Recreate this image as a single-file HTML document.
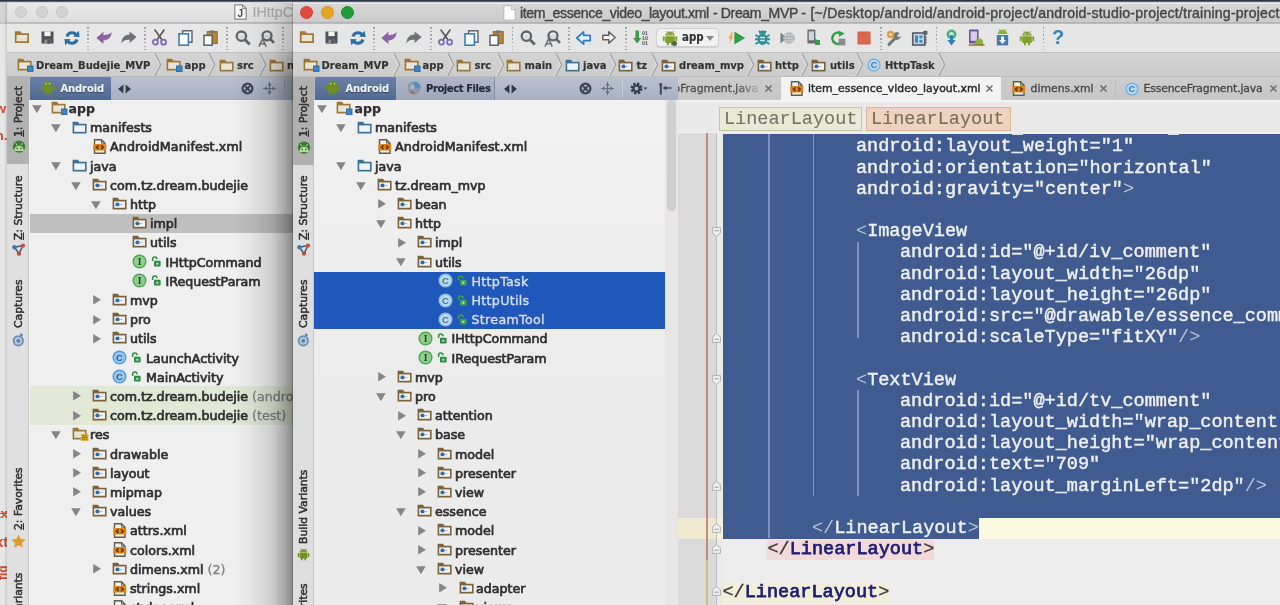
<!DOCTYPE html><html><head><meta charset="utf-8"><title>item_essence_video_layout.xml - Dream_MVP</title><style>
*{box-sizing:border-box;margin:0;padding:0}
html,body{width:1280px;height:605px;overflow:hidden;background:#e9e9e9}
#root{position:absolute;left:0;top:0;width:1280px;height:605px;overflow:hidden;font-family:"DejaVu Sans","Liberation Sans",sans-serif;color:#2b2b2b;filter:blur(0.6px)}
#root div,#root span,#root svg{position:absolute}
.ic{overflow:visible}
.topbar{left:0;top:0;width:1280px;height:3px;background:linear-gradient(#2a3346 0,#2c3549 40%,rgba(120,126,138,0.55) 68%,rgba(200,200,200,0) 90%)}
.behind{left:0;top:0;width:8px;height:605px;background:linear-gradient(#d6d6d6 0,#d2d2d2 22px,#b4b4b4 23px,#e7e7e7 24.5px,#e7e7e7 100%)}
.behindtxt{color:#cf4a34;font-size:13.5px;font-weight:bold;white-space:pre;font-family:"Liberation Sans",sans-serif}
.win{top:0;height:605px;overflow:hidden}
.titlebar{left:0;top:0;right:0;height:23px;background:linear-gradient(#ebebeb,#d9d9d9)}
.toolbar{left:0;top:23px;right:0;height:29px;background:#ececec;border-top:1px solid #c9c9c9}
.crumbs{left:0;top:52px;right:0;height:25px;background:linear-gradient(#d9d9d9,#d2d2d2);border-top:1px solid #bdbdbd;border-bottom:1px solid #b4b4b4}
.t{white-space:pre;line-height:1;transform:translateY(-50%)}
.tree{font-size:12.65px;-webkit-text-stroke:0.7px #303030;color:#303030}
.treeb{font-size:12.5px;font-weight:bold;-webkit-text-stroke:0.25px #2b2b2b;margin-left:-0.5px}
.gray{color:#808080;-webkit-text-stroke:0.3px #808080}
.crumb{font-family:"DejaVu Sans Condensed","DejaVu Sans",sans-serif;font-weight:bold;font-size:11.1px;-webkit-text-stroke:0.15px #333;color:#333}
.tab{font-size:10.85px;color:#444;-webkit-text-stroke:0.3px #444}
.title{font-family:"Liberation Sans",sans-serif;font-size:14.1px;color:#464646;-webkit-text-stroke:0.4px #464646}
.strip{top:77px;width:21px;bottom:0;background:#e3e3e3;border-right:1px solid #c4c4c4}
.stripsel{left:0;top:0;width:21px;height:88px;background:#b3b3b3}
.vt{white-space:pre;font-size:10.8px;line-height:1;transform-origin:0 0;transform:rotate(-90deg);-webkit-text-stroke:0.5px #303030;color:#303030}
.sep{width:1.6px;top:27px;height:23px;background:repeating-linear-gradient(180deg,#a4a4a4 0,#a4a4a4 1.5px,rgba(0,0,0,0) 1.5px,rgba(0,0,0,0) 3.7px)}
.code{font-family:"Liberation Mono",monospace;font-weight:normal;font-size:18.54px;white-space:pre;line-height:1;transform:translateY(-50%);color:#efefef;-webkit-text-stroke:0.45px #efefef}
.code i{font-style:normal;font-weight:normal;color:#b9c4d8;-webkit-text-stroke:0}
.code.ns i{color:#3a3a3a;-webkit-text-stroke:0.3px #3a3a3a}

</style></head><body><div id="root">
<div class="behind"></div>
<div class="behindtxt" style="top:101px;left:-4.5px">w</div>
<div class="behindtxt" style="top:127.5px;left:-4.5px">n.</div>
<div class="behindtxt" style="top:506px;left:-7px;text-decoration:line-through">ax</div>
<div class="behindtxt" style="top:533px;left:-5px;font-size:15px">xt</div>
<div class="behindtxt" style="top:580px;left:-4px;transform-origin:0 0;transform:rotate(-90deg);font-size:12px">fig</div>
<div style="left:4px;top:3px;width:3.5px;height:602px;background:linear-gradient(90deg,rgba(0,0,0,0),rgba(0,0,0,0.10) 60%,rgba(0,0,0,0.28) 100%)"></div>
<div style="left:7px;top:3px;width:300px;height:602px;background:#f6f6f6;"></div><div style="left:7px;top:3px;width:300px;height:20px;background:linear-gradient(#e9e9e9,#dedede);border-bottom:1px solid #b9b9b9"></div><div style="left:15px;top:6px;width:12px;height:12px;border-radius:6px;background:#d2d2d2;border:1px solid #c6c6c6"></div><div style="left:35.5px;top:6px;width:12px;height:12px;border-radius:6px;background:#d2d2d2;border:1px solid #c6c6c6"></div><div style="left:56px;top:6px;width:12px;height:12px;border-radius:6px;background:#d2d2d2;border:1px solid #c6c6c6"></div><svg class="ic" style="left:233.5px;top:4px" width="13" height="16" viewBox="0 0 13 16" ><path d="M0.8 0.8 H8.4 L12.2 4.6 V15.2 H0.8 Z" fill="#fafafa" stroke="#8a8a8a" stroke-width="1.2"/><path d="M8.4 0.8 V4.6 H12.2" fill="none" stroke="#8a8a8a" stroke-width="1"/><text x="6.4" y="13" text-anchor="middle" font-family="Liberation Sans,sans-serif" font-weight="bold" font-size="10" fill="#4a4a4a">J</text></svg><div class="t title" style="left:252.5px;top:12.3px;color:#adadad;-webkit-text-stroke:0.2px #adadad;font-size:14.3px">IHttpC</div><div style="left:7px;top:23px;width:300px;height:29px;background:#e7e7e7;border-top:1px solid #c0c0c0"></div><svg class="ic" style="left:13.5px;top:30px" width="16" height="14" viewBox="0 0 16 14" ><path d="M0.8 1.2 H6.4 L7.8 3.2 H15 V13 H0.8 Z" fill="#a07a38"/><rect x="2.6" y="5" width="10.6" height="6.2" fill="#e9e3d3"/></svg><svg class="ic" style="left:40.5px;top:30.5px" width="13" height="13" viewBox="0 0 13 13" ><path d="M0.5 0.5 H12.5 V12.5 H0.5 Z" fill="#4f5358"/><rect x="3.4" y="0.5" width="6.2" height="4.6" fill="#f2f2f2"/><rect x="3.4" y="8.6" width="6.2" height="3.9" fill="#8a8d92"/><rect x="6.4" y="9" width="2.6" height="3.5" fill="#4f5358"/></svg><svg class="ic" style="left:64px;top:29.5px" width="16" height="16" viewBox="0 0 16 16" ><path d="M12.6 5.2 A5.3 5.3 0 0 0 3 6.5 M3.4 10.8 A5.3 5.3 0 0 0 13 9.5" fill="none" stroke="#2a70a4" stroke-width="3"/><path d="M9.2 6.8 L15.6 7 L14.8 0.8 Z M6.8 9.2 L0.4 9 L1.2 15.2 Z" fill="#2a70a4"/></svg><div class="sep" style="left:87px"></div><svg class="ic" style="left:96px;top:31px" width="16" height="13" viewBox="0 0 16 13" ><path d="M0.4 7 L7.4 0.8 V4.2 C11.5 4.2 15 2.8 15.6 0.6 C15.6 6 12.5 9.6 7.4 9.6 V13 Z" fill="#8a64a4"/></svg><svg class="ic" style="left:121px;top:31px" width="16" height="13" viewBox="0 0 16 13" ><path d="M15.6 6 L8.6 0.4 V3.6 C4 3.6 0.6 6.6 0.4 12.4 C2 9.6 4.8 8.6 8.6 8.8 V12 Z" fill="#6f7378"/></svg><div class="sep" style="left:144px"></div><svg class="ic" style="left:152px;top:29px" width="15" height="17" viewBox="0 0 15 17" ><path d="M2.6 0.6 L10.4 11.4 M12.4 0.6 L4.6 11.4" stroke="#55595e" stroke-width="1.7" fill="none"/><circle cx="3.4" cy="13.2" r="2.5" fill="none" stroke="#7d68b4" stroke-width="1.7"/><circle cx="11.6" cy="13.2" r="2.5" fill="none" stroke="#7d68b4" stroke-width="1.7"/></svg><svg class="ic" style="left:178px;top:29.5px" width="15" height="16" viewBox="0 0 15 16" ><rect x="4.6" y="0.8" width="9.4" height="11.4" fill="#f4f6f8" stroke="#5a6068" stroke-width="1.4"/><rect x="1" y="3.8" width="9.4" height="11.4" fill="#fafcfe" stroke="#3f7fb0" stroke-width="1.6"/></svg><svg class="ic" style="left:203px;top:29.5px" width="15" height="16" viewBox="0 0 15 16" ><rect x="4.2" y="1.6" width="10" height="12" fill="#b8862e" stroke="#8c6420" stroke-width="1"/><rect x="7" y="0.4" width="4.4" height="2.6" fill="#777"/><rect x="1" y="5.4" width="8.2" height="9.8" fill="#fafafa" stroke="#5a6068" stroke-width="1.5"/></svg><div class="sep" style="left:226px"></div><svg class="ic" style="left:235px;top:29.5px" width="16" height="16" viewBox="0 0 16 16" ><circle cx="6.4" cy="6.2" r="4.7" fill="#d9dde0" stroke="#62666c" stroke-width="2.3"/><path d="M10 9.8 L14.8 14.6" stroke="#62666c" stroke-width="2.8"/><path d="M4 5.2 A2.6 2.6 0 0 1 8.8 5.2" fill="none" stroke="#f4f4f4" stroke-width="1.2"/></svg><svg class="ic" style="left:258px;top:29.5px" width="17" height="17" viewBox="0 0 17 17" ><circle cx="9" cy="5.8" r="4.5" fill="#d9dde0" stroke="#62666c" stroke-width="2.3"/><path d="M12.2 9 L16 12.8" stroke="#62666c" stroke-width="2.6"/><path d="M6.6 4.8 A2.6 2.6 0 0 1 11.4 4.8" fill="none" stroke="#f4f4f4" stroke-width="1.2"/><path d="M1 16.6 L4.6 8.6 L8.2 16.6 M2.4 13.8 H6.8" fill="none" stroke="#6c7076" stroke-width="1.5"/></svg><div class="sep" style="left:282px"></div><div style="left:7px;top:52px;width:300px;height:25px;background:linear-gradient(#d4d4d4,#cdcdcd);border-top:1px solid #c4c4c4;border-bottom:1px solid #b8b8b8"></div><svg class="ic" style="left:17px;top:58px" width="17" height="14" viewBox="0 0 17 14" ><path d="M0.6 0.8 H6 L7.4 2.8 H14.6 V12.4 H0.6 Z" fill="#9c7636"/><rect x="2.2" y="4.4" width="10.8" height="6.4" fill="#e9e4d6"/><rect x="10" y="7.5" width="6.5" height="6.5" fill="#2d74b2"/><rect x="11.2" y="8.7" width="4" height="4" fill="#4189c6"/></svg><div class="t crumb" style="left:36px;top:65.6px;">Dream_Budejie_MVP</div><svg class="ic" style="left:153px;top:53px" width="8" height="23" viewBox="0 0 8 23" ><path d="M0.6 0 L6.6 11.5 L0.6 23" fill="none" stroke="#e0e0e0" stroke-width="1.3"/><path d="M1.7 0 L7.7 11.5 L1.7 23" fill="none" stroke="#9c9c9c" stroke-width="1.1"/></svg><svg class="ic" style="left:166px;top:58px" width="17" height="14" viewBox="0 0 17 14" ><path d="M0.6 0.8 H6 L7.4 2.8 H14.6 V12.4 H0.6 Z" fill="#9c7636"/><rect x="2.2" y="4.4" width="10.8" height="6.4" fill="#e9e4d6"/><rect x="10" y="7.5" width="6.5" height="6.5" fill="#2d74b2"/><rect x="11.2" y="8.7" width="4" height="4" fill="#4189c6"/></svg><div class="t crumb" style="left:184.5px;top:65.6px;">app</div><svg class="ic" style="left:207px;top:53px" width="8" height="23" viewBox="0 0 8 23" ><path d="M0.6 0 L6.6 11.5 L0.6 23" fill="none" stroke="#e0e0e0" stroke-width="1.3"/><path d="M1.7 0 L7.7 11.5 L1.7 23" fill="none" stroke="#9c9c9c" stroke-width="1.1"/></svg><svg class="ic" style="left:218.5px;top:58.5px" width="16" height="13" viewBox="0 0 16 13" ><path d="M0.6 0.8 H6 L7.4 2.8 H14.6 V12.4 H0.6 Z" fill="#9c7636"/><rect x="2.2" y="4.4" width="10.8" height="6.4" fill="#e9e4d6"/></svg><div class="t crumb" style="left:237px;top:65.6px;">src</div><svg class="ic" style="left:258px;top:53px" width="8" height="23" viewBox="0 0 8 23" ><path d="M0.6 0 L6.6 11.5 L0.6 23" fill="none" stroke="#e0e0e0" stroke-width="1.3"/><path d="M1.7 0 L7.7 11.5 L1.7 23" fill="none" stroke="#9c9c9c" stroke-width="1.1"/></svg><svg class="ic" style="left:268.5px;top:58.5px" width="16" height="13" viewBox="0 0 16 13" ><path d="M0.6 0.8 H6 L7.4 2.8 H14.6 V12.4 H0.6 Z" fill="#9c7636"/><rect x="2.2" y="4.4" width="10.8" height="6.4" fill="#e9e4d6"/></svg><div class="t crumb" style="left:287px;top:65.6px;">n</div><div style="left:7px;top:77px;width:22px;height:528px;background:#e0e0e0;border-right:1px solid #c8c8c8"></div><div style="left:7px;top:77px;width:21.5px;height:87px;background:#b2b2b2;"></div><div class="vt" style="left:13.5px;top:136.5px;"><u>1</u>: Project</div><svg class="ic" style="left:11.5px;top:140px" width="14" height="13" viewBox="0 0 14 13" ><circle cx="7" cy="6.6" r="6.2" fill="#3d7f30"/><path d="M2.2 11 A4.8 5.2 0 0 1 11.8 11 Z" fill="#b4dca0"/><path d="M3.6 3 L5.2 5.6 M10.4 3 L8.8 5.6" stroke="#b4dca0" stroke-width="1"/><circle cx="5.2" cy="8.6" r="0.8" fill="#2f6a26"/><circle cx="8.8" cy="8.6" r="0.8" fill="#2f6a26"/></svg><div class="vt" style="left:13.5px;top:239.5px;"><u>Z</u>: Structure</div><svg class="ic" style="left:11.5px;top:243px" width="14" height="13" viewBox="0 0 14 13" ><path d="M2.4 4.2 L11 2.6 L7 10.6 Z" fill="none" stroke="#3f5878" stroke-width="1.5"/><circle cx="2.4" cy="4.2" r="2.2" fill="#3a78ba"/><circle cx="11" cy="2.6" r="2.1" fill="#cc5238"/><circle cx="7" cy="10.6" r="2.2" fill="#b8523c"/></svg><div class="vt" style="left:13.5px;top:328px;">Captures</div><svg class="ic" style="left:11.5px;top:332.5px" width="13" height="14" viewBox="0 0 13 14" ><path d="M8.2 1.2 L10.4 2.6" stroke="#56789f" stroke-width="2"/><circle cx="6.3" cy="7.8" r="5.6" fill="#688cb3"/><circle cx="6.3" cy="7.8" r="3.9" fill="#b2c6dc"/><circle cx="6.3" cy="7.8" r="1.9" fill="#5d7ea6"/></svg><div class="vt" style="left:13.5px;top:530px;"><u>2</u>: Favorites</div><svg class="ic" style="left:11px;top:534px" width="15" height="14" viewBox="0 0 15 14" ><path d="M7.5 0.4 L9.6 5 L14.6 5.5 L10.9 8.9 L12 13.8 L7.5 11.3 L3 13.8 L4.1 8.9 L0.4 5.5 L5.4 5 Z" fill="#e39a2a"/></svg><div class="vt" style="left:13.5px;top:646.5px;">Build Variants</div><div style="left:29px;top:77px;width:280px;height:23px;background:linear-gradient(#bac2d1,#a8b1c3)"></div><div style="left:30px;top:77px;width:81px;height:23px;background:linear-gradient(#6a80a6,#52698f)"></div><svg class="ic" style="left:40.3px;top:80.3px" width="15.5" height="15.5" viewBox="0 0 16 16" ><path d="M3.2 6.2 H12.8 V12 A1 1 0 0 1 11.8 13 H4.2 A1 1 0 0 1 3.2 12 Z" fill="#6f8f22"/><path d="M3.3 5.6 A4.7 4.2 0 0 1 12.7 5.6 Z" fill="#6f8f22"/><rect x="0.8" y="6.2" width="1.9" height="5" rx="0.95" fill="#6f8f22"/><rect x="13.3" y="6.2" width="1.9" height="5" rx="0.95" fill="#6f8f22"/><rect x="5" y="12" width="2" height="3.4" rx="1" fill="#6f8f22"/><rect x="9" y="12" width="2" height="3.4" rx="1" fill="#6f8f22"/><path d="M4.6 0.8 L5.8 2.6 M11.4 0.8 L10.2 2.6" stroke="#6f8f22" stroke-width="0.8"/><circle cx="6" cy="3.8" r="0.6" fill="#fff"/><circle cx="10" cy="3.8" r="0.6" fill="#fff"/></svg><div class="t crumb" style="left:60.5px;top:88.5px;color:#f2f4f8;-webkit-text-stroke:0.1px #f2f4f8;text-shadow:0 1px 1px #33415c;letter-spacing:-0.118px;">Android</div><svg class="ic" style="left:118px;top:83.5px" width="13" height="10" viewBox="0 0 13 10" ><path d="M0 5 L5.4 0.4 V9.6 Z M13 5 L7.6 0.4 V9.6 Z" fill="#2f3a4a"/></svg><svg class="ic" style="left:241px;top:82px" width="13" height="13" viewBox="0 0 13 13" ><circle cx="6.5" cy="6.5" r="4.9" fill="none" stroke="#3d4758" stroke-width="2.3"/><path d="M3.4 3.4 L9.6 9.6 M9.6 3.4 L3.4 9.6" stroke="#3d4758" stroke-width="2"/><circle cx="6.5" cy="6.5" r="1.7" fill="#3d4758"/></svg><svg class="ic" style="left:263px;top:82px" width="13" height="13" viewBox="0 0 13 13" ><path d="M6.5 0 V13 M0 6.5 H13" stroke="#667087" stroke-width="1.2"/><path d="M6.5 5 L4.2 2.2 H8.8 Z M6.5 8 L4.2 10.8 H8.8 Z M5 6.5 L2.2 4.2 V8.8 Z M8 6.5 L10.8 4.2 V8.8 Z" fill="#667087"/></svg><div style="left:283.5px;top:80px;width:1px;height:17px;background:#98a5bb;"></div><div style="left:29.5px;top:100px;width:280px;height:505px;background:#efefef;"></div><div style="left:29.5px;top:214px;width:280px;height:19px;background:#bfbfbf;"></div><div style="left:29.5px;top:386px;width:280px;height:39px;background:#e1e8d6;"></div><svg class="ic" style="left:32.4px;top:104.7px" width="9.8" height="8.4" viewBox="0 0 9.8 8.4" ><path d="M0.1 0.2 H9.7 L4.9 8.2 Z" fill="#858585"/></svg><svg class="ic" style="left:51px;top:101.0px" width="17" height="14" viewBox="0 0 17 14" ><path d="M0.6 0.8 H6 L7.4 2.8 H14.6 V12.4 H0.6 Z" fill="#9c7636"/><rect x="2.2" y="4.4" width="10.8" height="6.4" fill="#e9e4d6"/><rect x="10" y="7.5" width="6.5" height="6.5" fill="#2d74b2"/><rect x="11.2" y="8.7" width="4" height="4" fill="#4189c6"/></svg><div class="t tree treeb" style="left:69px;top:108.9px;">app</div><svg class="ic" style="left:51.4px;top:123.9px" width="9.8" height="8.4" viewBox="0 0 9.8 8.4" ><path d="M0.1 0.2 H9.7 L4.9 8.2 Z" fill="#858585"/></svg><svg class="ic" style="left:72px;top:120.7px" width="16" height="13" viewBox="0 0 16 13" ><path d="M0.6 0.8 H6 L7.4 2.8 H14.6 V12.4 H0.6 Z" fill="#36729a"/><rect x="2.2" y="4.4" width="10.8" height="6.4" fill="#f1f4f6"/></svg><div class="t tree" style="left:90px;top:128.1px;">manifests</div><svg class="ic" style="left:93px;top:138.9px" width="14" height="15" viewBox="0 0 14 15" ><path d="M1.5 0.8 H8.5 L12 4.2 V14.2 H1.5 Z" fill="#f2f0ea" stroke="#625c50" stroke-width="1.4"/><path d="M8.5 0.8 V4.2 H12" fill="none" stroke="#625c50" stroke-width="1"/><rect x="0.3" y="5" width="13" height="6.6" rx="1.2" fill="#db851f"/><path d="M5.6 6.4 L3.3 8.3 L5.6 10.2 M8 6.4 L10.3 8.3 L8 10.2" fill="none" stroke="#6b3608" stroke-width="1.5"/></svg><div class="t tree" style="left:110px;top:147.3px;;letter-spacing:0.124px;">AndroidManifest.xml</div><svg class="ic" style="left:51.4px;top:162.3px" width="9.8" height="8.4" viewBox="0 0 9.8 8.4" ><path d="M0.1 0.2 H9.7 L4.9 8.2 Z" fill="#858585"/></svg><svg class="ic" style="left:72px;top:159.1px" width="16" height="13" viewBox="0 0 16 13" ><path d="M0.6 0.8 H6 L7.4 2.8 H14.6 V12.4 H0.6 Z" fill="#36729a"/><rect x="2.2" y="4.4" width="10.8" height="6.4" fill="#f1f4f6"/></svg><div class="t tree" style="left:90px;top:166.5px;">java</div><svg class="ic" style="left:71.4px;top:181.5px" width="9.8" height="8.4" viewBox="0 0 9.8 8.4" ><path d="M0.1 0.2 H9.7 L4.9 8.2 Z" fill="#858585"/></svg><svg class="ic" style="left:91.5px;top:177.7px" width="16" height="13" viewBox="0 0 16 13" ><path d="M0.6 0.8 H6 L7.4 2.8 H14.6 V12.4 H0.6 Z" fill="#7d6238"/><rect x="2.2" y="4.4" width="10.8" height="6.4" fill="#f1f1f4"/><ellipse cx="5.5" cy="7.4" rx="2.1" ry="1.9" fill="#2f6caa"/><rect x="7.6" y="7" width="2.8" height="0.9" fill="#a8b4c0"/></svg><div class="t tree" style="left:110px;top:185.7px;">com.tz.dream.budejie</div><svg class="ic" style="left:91.4px;top:200.7px" width="9.8" height="8.4" viewBox="0 0 9.8 8.4" ><path d="M0.1 0.2 H9.7 L4.9 8.2 Z" fill="#858585"/></svg><svg class="ic" style="left:111.5px;top:196.9px" width="16" height="13" viewBox="0 0 16 13" ><path d="M0.6 0.8 H6 L7.4 2.8 H14.6 V12.4 H0.6 Z" fill="#7d6238"/><rect x="2.2" y="4.4" width="10.8" height="6.4" fill="#f1f1f4"/><ellipse cx="5.5" cy="7.4" rx="2.1" ry="1.9" fill="#2f6caa"/><rect x="7.6" y="7" width="2.8" height="0.9" fill="#a8b4c0"/></svg><div class="t tree" style="left:130px;top:204.9px;">http</div><svg class="ic" style="left:131.5px;top:216.1px" width="16" height="13" viewBox="0 0 16 13" ><path d="M0.6 0.8 H6 L7.4 2.8 H14.6 V12.4 H0.6 Z" fill="#7d6238"/><rect x="2.2" y="4.4" width="10.8" height="6.4" fill="#f1f1f4"/><ellipse cx="5.5" cy="7.4" rx="2.1" ry="1.9" fill="#2f6caa"/><rect x="7.6" y="7" width="2.8" height="0.9" fill="#a8b4c0"/></svg><div class="t tree" style="left:150px;top:224.1px;">impl</div><svg class="ic" style="left:131.5px;top:235.3px" width="16" height="13" viewBox="0 0 16 13" ><path d="M0.6 0.8 H6 L7.4 2.8 H14.6 V12.4 H0.6 Z" fill="#7d6238"/><rect x="2.2" y="4.4" width="10.8" height="6.4" fill="#f1f1f4"/><ellipse cx="5.5" cy="7.4" rx="2.1" ry="1.9" fill="#2f6caa"/><rect x="7.6" y="7" width="2.8" height="0.9" fill="#a8b4c0"/></svg><div class="t tree" style="left:150px;top:243.3px;">utils</div><svg class="ic" style="left:132px;top:254.1px" width="15" height="15" viewBox="0 0 15 15" ><circle cx="7.5" cy="7.5" r="7" fill="#4fa653"/><circle cx="7.5" cy="7.5" r="5.6" fill="#90cf8d"/><text x="7.5" y="11" text-anchor="middle" font-family='"Liberation Serif",serif' font-weight="bold" font-size="9.5" fill="#1c4a24">I</text></svg><svg class="ic" style="left:150.5px;top:256.1px" width="10" height="11" viewBox="0 0 10 11" ><path d="M1.6 5 V3.2 A2.2 2.2 0 0 1 6 3.2" fill="none" stroke="#2f8c44" stroke-width="1.5"/><rect x="3" y="4.8" width="6.6" height="5.8" rx="0.8" fill="#2f8c44"/><rect x="5.3" y="6.8" width="2" height="1.9" fill="#cfe8d0"/></svg><div class="t tree" style="left:165.5px;top:262.5px;">IHttpCommand</div><svg class="ic" style="left:132px;top:273.3px" width="15" height="15" viewBox="0 0 15 15" ><circle cx="7.5" cy="7.5" r="7" fill="#4fa653"/><circle cx="7.5" cy="7.5" r="5.6" fill="#90cf8d"/><text x="7.5" y="11" text-anchor="middle" font-family='"Liberation Serif",serif' font-weight="bold" font-size="9.5" fill="#1c4a24">I</text></svg><svg class="ic" style="left:150.5px;top:275.3px" width="10" height="11" viewBox="0 0 10 11" ><path d="M1.6 5 V3.2 A2.2 2.2 0 0 1 6 3.2" fill="none" stroke="#2f8c44" stroke-width="1.5"/><rect x="3" y="4.8" width="6.6" height="5.8" rx="0.8" fill="#2f8c44"/><rect x="5.3" y="6.8" width="2" height="1.9" fill="#cfe8d0"/></svg><div class="t tree" style="left:165.5px;top:281.7px;">IRequestParam</div><svg class="ic" style="left:92.7px;top:295.4px" width="8.2" height="9.6" viewBox="0 0 8.2 9.6" ><path d="M0.2 0.1 V9.5 L8 4.8 Z" fill="#858585"/></svg><svg class="ic" style="left:111.5px;top:292.9px" width="16" height="13" viewBox="0 0 16 13" ><path d="M0.6 0.8 H6 L7.4 2.8 H14.6 V12.4 H0.6 Z" fill="#7d6238"/><rect x="2.2" y="4.4" width="10.8" height="6.4" fill="#f1f1f4"/><ellipse cx="5.5" cy="7.4" rx="2.1" ry="1.9" fill="#2f6caa"/><rect x="7.6" y="7" width="2.8" height="0.9" fill="#a8b4c0"/></svg><div class="t tree" style="left:130px;top:300.9px;">mvp</div><svg class="ic" style="left:92.7px;top:314.6px" width="8.2" height="9.6" viewBox="0 0 8.2 9.6" ><path d="M0.2 0.1 V9.5 L8 4.8 Z" fill="#858585"/></svg><svg class="ic" style="left:111.5px;top:312.1px" width="16" height="13" viewBox="0 0 16 13" ><path d="M0.6 0.8 H6 L7.4 2.8 H14.6 V12.4 H0.6 Z" fill="#7d6238"/><rect x="2.2" y="4.4" width="10.8" height="6.4" fill="#f1f1f4"/><ellipse cx="5.5" cy="7.4" rx="2.1" ry="1.9" fill="#2f6caa"/><rect x="7.6" y="7" width="2.8" height="0.9" fill="#a8b4c0"/></svg><div class="t tree" style="left:130px;top:320.1px;">pro</div><svg class="ic" style="left:92.7px;top:333.8px" width="8.2" height="9.6" viewBox="0 0 8.2 9.6" ><path d="M0.2 0.1 V9.5 L8 4.8 Z" fill="#858585"/></svg><svg class="ic" style="left:111.5px;top:331.3px" width="16" height="13" viewBox="0 0 16 13" ><path d="M0.6 0.8 H6 L7.4 2.8 H14.6 V12.4 H0.6 Z" fill="#7d6238"/><rect x="2.2" y="4.4" width="10.8" height="6.4" fill="#f1f1f4"/><ellipse cx="5.5" cy="7.4" rx="2.1" ry="1.9" fill="#2f6caa"/><rect x="7.6" y="7" width="2.8" height="0.9" fill="#a8b4c0"/></svg><div class="t tree" style="left:130px;top:339.3px;">utils</div><svg class="ic" style="left:112px;top:350.1px" width="15" height="15" viewBox="0 0 15 15" ><circle cx="7.5" cy="7.5" r="7" fill="#4f9bdc"/><circle cx="7.5" cy="7.5" r="5.6" fill="#98c9f0"/><text x="7.5" y="11" text-anchor="middle" font-family='"Liberation Sans",sans-serif' font-weight="bold" font-size="9.5" fill="#2c5c8c">C</text></svg><svg class="ic" style="left:130.5px;top:352.1px" width="10" height="11" viewBox="0 0 10 11" ><path d="M1.6 5 V3.2 A2.2 2.2 0 0 1 6 3.2" fill="none" stroke="#2f8c44" stroke-width="1.5"/><rect x="3" y="4.8" width="6.6" height="5.8" rx="0.8" fill="#2f8c44"/><rect x="5.3" y="6.8" width="2" height="1.9" fill="#cfe8d0"/></svg><div class="t tree" style="left:146px;top:358.5px;">LaunchActivity</div><svg class="ic" style="left:112px;top:369.3px" width="15" height="15" viewBox="0 0 15 15" ><circle cx="7.5" cy="7.5" r="7" fill="#4f9bdc"/><circle cx="7.5" cy="7.5" r="5.6" fill="#98c9f0"/><text x="7.5" y="11" text-anchor="middle" font-family='"Liberation Sans",sans-serif' font-weight="bold" font-size="9.5" fill="#2c5c8c">C</text></svg><svg class="ic" style="left:130.5px;top:371.3px" width="10" height="11" viewBox="0 0 10 11" ><path d="M1.6 5 V3.2 A2.2 2.2 0 0 1 6 3.2" fill="none" stroke="#2f8c44" stroke-width="1.5"/><rect x="3" y="4.8" width="6.6" height="5.8" rx="0.8" fill="#2f8c44"/><rect x="5.3" y="6.8" width="2" height="1.9" fill="#cfe8d0"/></svg><div class="t tree" style="left:146px;top:377.7px;">MainActivity</div><svg class="ic" style="left:72.7px;top:391.4px" width="8.2" height="9.6" viewBox="0 0 8.2 9.6" ><path d="M0.2 0.1 V9.5 L8 4.8 Z" fill="#858585"/></svg><svg class="ic" style="left:91.5px;top:388.9px" width="16" height="13" viewBox="0 0 16 13" ><path d="M0.6 0.8 H6 L7.4 2.8 H14.6 V12.4 H0.6 Z" fill="#7d6238"/><rect x="2.2" y="4.4" width="10.8" height="6.4" fill="#f1f1f4"/><ellipse cx="5.5" cy="7.4" rx="2.1" ry="1.9" fill="#2f6caa"/><rect x="7.6" y="7" width="2.8" height="0.9" fill="#a8b4c0"/></svg><div class="t tree" style="left:110px;top:396.9px;">com.tz.dream.budejie<span class="gray" style="position:static"> (andro</span></div><svg class="ic" style="left:72.7px;top:410.6px" width="8.2" height="9.6" viewBox="0 0 8.2 9.6" ><path d="M0.2 0.1 V9.5 L8 4.8 Z" fill="#858585"/></svg><svg class="ic" style="left:91.5px;top:408.1px" width="16" height="13" viewBox="0 0 16 13" ><path d="M0.6 0.8 H6 L7.4 2.8 H14.6 V12.4 H0.6 Z" fill="#7d6238"/><rect x="2.2" y="4.4" width="10.8" height="6.4" fill="#f1f1f4"/><ellipse cx="5.5" cy="7.4" rx="2.1" ry="1.9" fill="#2f6caa"/><rect x="7.6" y="7" width="2.8" height="0.9" fill="#a8b4c0"/></svg><div class="t tree" style="left:110px;top:416.1px;">com.tz.dream.budejie<span class="gray" style="position:static"> (test)</span></div><svg class="ic" style="left:51.4px;top:431.1px" width="9.8" height="8.4" viewBox="0 0 9.8 8.4" ><path d="M0.1 0.2 H9.7 L4.9 8.2 Z" fill="#858585"/></svg><svg class="ic" style="left:72px;top:427.4px" width="17" height="14" viewBox="0 0 17 14" ><path d="M0.6 0.8 H6 L7.4 2.8 H14.6 V12.4 H0.6 Z" fill="#9c7636"/><rect x="2.2" y="4.4" width="10.8" height="6.4" fill="#e9e4d6"/><rect x="9" y="7" width="7.5" height="7" fill="#e8b23a"/><path d="M10 8.8h5.5M10 10.5h5.5M10 12.2h5.5" stroke="#8a6414" stroke-width="0.9"/></svg><div class="t tree" style="left:90px;top:435.3px;">res</div><svg class="ic" style="left:72.7px;top:449.0px" width="8.2" height="9.6" viewBox="0 0 8.2 9.6" ><path d="M0.2 0.1 V9.5 L8 4.8 Z" fill="#858585"/></svg><svg class="ic" style="left:91.5px;top:446.5px" width="16" height="13" viewBox="0 0 16 13" ><path d="M0.6 0.8 H6 L7.4 2.8 H14.6 V12.4 H0.6 Z" fill="#7d6238"/><rect x="2.2" y="4.4" width="10.8" height="6.4" fill="#f1f1f4"/><ellipse cx="5.5" cy="7.4" rx="2.1" ry="1.9" fill="#2f6caa"/><rect x="7.6" y="7" width="2.8" height="0.9" fill="#a8b4c0"/></svg><div class="t tree" style="left:110px;top:454.5px;">drawable</div><svg class="ic" style="left:72.7px;top:468.2px" width="8.2" height="9.6" viewBox="0 0 8.2 9.6" ><path d="M0.2 0.1 V9.5 L8 4.8 Z" fill="#858585"/></svg><svg class="ic" style="left:91.5px;top:465.7px" width="16" height="13" viewBox="0 0 16 13" ><path d="M0.6 0.8 H6 L7.4 2.8 H14.6 V12.4 H0.6 Z" fill="#7d6238"/><rect x="2.2" y="4.4" width="10.8" height="6.4" fill="#f1f1f4"/><ellipse cx="5.5" cy="7.4" rx="2.1" ry="1.9" fill="#2f6caa"/><rect x="7.6" y="7" width="2.8" height="0.9" fill="#a8b4c0"/></svg><div class="t tree" style="left:110px;top:473.7px;">layout</div><svg class="ic" style="left:72.7px;top:487.4px" width="8.2" height="9.6" viewBox="0 0 8.2 9.6" ><path d="M0.2 0.1 V9.5 L8 4.8 Z" fill="#858585"/></svg><svg class="ic" style="left:91.5px;top:484.9px" width="16" height="13" viewBox="0 0 16 13" ><path d="M0.6 0.8 H6 L7.4 2.8 H14.6 V12.4 H0.6 Z" fill="#7d6238"/><rect x="2.2" y="4.4" width="10.8" height="6.4" fill="#f1f1f4"/><ellipse cx="5.5" cy="7.4" rx="2.1" ry="1.9" fill="#2f6caa"/><rect x="7.6" y="7" width="2.8" height="0.9" fill="#a8b4c0"/></svg><div class="t tree" style="left:110px;top:492.9px;">mipmap</div><svg class="ic" style="left:71.4px;top:507.9px" width="9.8" height="8.4" viewBox="0 0 9.8 8.4" ><path d="M0.1 0.2 H9.7 L4.9 8.2 Z" fill="#858585"/></svg><svg class="ic" style="left:91.5px;top:504.1px" width="16" height="13" viewBox="0 0 16 13" ><path d="M0.6 0.8 H6 L7.4 2.8 H14.6 V12.4 H0.6 Z" fill="#7d6238"/><rect x="2.2" y="4.4" width="10.8" height="6.4" fill="#f1f1f4"/><ellipse cx="5.5" cy="7.4" rx="2.1" ry="1.9" fill="#2f6caa"/><rect x="7.6" y="7" width="2.8" height="0.9" fill="#a8b4c0"/></svg><div class="t tree" style="left:110px;top:512.1px;">values</div><svg class="ic" style="left:113px;top:522.9px" width="14" height="15" viewBox="0 0 14 15" ><path d="M1.5 0.8 H8.5 L12 4.2 V14.2 H1.5 Z" fill="#f2f0ea" stroke="#625c50" stroke-width="1.4"/><path d="M8.5 0.8 V4.2 H12" fill="none" stroke="#625c50" stroke-width="1"/><rect x="0.3" y="5" width="13" height="6.6" rx="1.2" fill="#db851f"/><path d="M5.6 6.4 L3.3 8.3 L5.6 10.2 M8 6.4 L10.3 8.3 L8 10.2" fill="none" stroke="#6b3608" stroke-width="1.5"/></svg><div class="t tree" style="left:130px;top:531.3px;">attrs.xml</div><svg class="ic" style="left:113px;top:542.1px" width="14" height="15" viewBox="0 0 14 15" ><path d="M1.5 0.8 H8.5 L12 4.2 V14.2 H1.5 Z" fill="#f2f0ea" stroke="#625c50" stroke-width="1.4"/><path d="M8.5 0.8 V4.2 H12" fill="none" stroke="#625c50" stroke-width="1"/><rect x="0.3" y="5" width="13" height="6.6" rx="1.2" fill="#db851f"/><path d="M5.6 6.4 L3.3 8.3 L5.6 10.2 M8 6.4 L10.3 8.3 L8 10.2" fill="none" stroke="#6b3608" stroke-width="1.5"/></svg><div class="t tree" style="left:130px;top:550.5px;">colors.xml</div><svg class="ic" style="left:92.7px;top:564.2px" width="8.2" height="9.6" viewBox="0 0 8.2 9.6" ><path d="M0.2 0.1 V9.5 L8 4.8 Z" fill="#858585"/></svg><svg class="ic" style="left:111.5px;top:561.7px" width="16" height="13" viewBox="0 0 16 13" ><path d="M0.6 0.8 H6 L7.4 2.8 H14.6 V12.4 H0.6 Z" fill="#7d6238"/><rect x="2.2" y="4.4" width="10.8" height="6.4" fill="#f1f1f4"/><ellipse cx="5.5" cy="7.4" rx="2.1" ry="1.9" fill="#2f6caa"/><rect x="7.6" y="7" width="2.8" height="0.9" fill="#a8b4c0"/></svg><div class="t tree" style="left:130px;top:569.7px;">dimens.xml<span class="gray" style="position:static"> (2)</span></div><svg class="ic" style="left:113px;top:580.5px" width="14" height="15" viewBox="0 0 14 15" ><path d="M1.5 0.8 H8.5 L12 4.2 V14.2 H1.5 Z" fill="#f2f0ea" stroke="#625c50" stroke-width="1.4"/><path d="M8.5 0.8 V4.2 H12" fill="none" stroke="#625c50" stroke-width="1"/><rect x="0.3" y="5" width="13" height="6.6" rx="1.2" fill="#db851f"/><path d="M5.6 6.4 L3.3 8.3 L5.6 10.2 M8 6.4 L10.3 8.3 L8 10.2" fill="none" stroke="#6b3608" stroke-width="1.5"/></svg><div class="t tree" style="left:130px;top:588.9px;">strings.xml</div><svg class="ic" style="left:113px;top:599.7px" width="14" height="15" viewBox="0 0 14 15" ><path d="M1.5 0.8 H8.5 L12 4.2 V14.2 H1.5 Z" fill="#f2f0ea" stroke="#625c50" stroke-width="1.4"/><path d="M8.5 0.8 V4.2 H12" fill="none" stroke="#625c50" stroke-width="1"/><rect x="0.3" y="5" width="13" height="6.6" rx="1.2" fill="#db851f"/><path d="M5.6 6.4 L3.3 8.3 L5.6 10.2 M8 6.4 L10.3 8.3 L8 10.2" fill="none" stroke="#6b3608" stroke-width="1.5"/></svg><div class="t tree" style="left:130px;top:608.1px;">styles.xml</div><div style="left:233px;top:3px;width:60px;height:602px;-webkit-mask-image:linear-gradient(180deg,rgba(0,0,0,0.38) 0,rgba(0,0,0,0.5) 45px,#000 76px);mask-image:linear-gradient(180deg,rgba(0,0,0,0.38) 0,rgba(0,0,0,0.5) 45px,#000 76px);background:linear-gradient(90deg,rgba(0,0,0,0) 0,rgba(0,0,0,0.04) 30%,rgba(0,0,0,0.14) 65%,rgba(0,0,0,0.29) 85%,rgba(0,0,0,0.43) 100%)"></div>
<div style="left:293px;top:3px;width:987px;height:602px;background:#ececec;"></div><div style="left:293px;top:3px;width:987px;height:20px;background:linear-gradient(#f0f0f0 0,#d6d6d6 1.6px,#cbcbcb 100%);border-bottom:1px solid #b2b2b2"></div><div style="left:300.3px;top:5.5px;width:13px;height:13px;border-radius:6.5px;background:#e2493b;border:1px solid #cf3d31"></div><div style="left:320.5px;top:5.5px;width:13px;height:13px;border-radius:6.5px;background:#e6a624;border:1px solid #d4961c"></div><div style="left:340.8px;top:5.5px;width:13px;height:13px;border-radius:6.5px;background:#1f9c3a;border:1px solid #198a32"></div><svg class="ic" style="left:503px;top:4.5px" width="13" height="16" viewBox="0 0 13 16" ><path d="M0.8 0.8 H8.4 L12.2 4.6 V15.2 H0.8 Z" fill="#fdfdfd" stroke="#b5b5b5" stroke-width="1"/><path d="M8.4 0.8 V4.6 H12.2" fill="#e4e4e4" stroke="#b5b5b5" stroke-width="0.8"/></svg><div class="t title" style="left:520px;top:12.6px;;letter-spacing:-0.38px;">item_essence_video_layout.xml</div><div class="t title" style="left:713px;top:12.6px;;letter-spacing:-0.395px;">- Dream_MVP -</div><div class="t title" style="left:810.5px;top:12.6px;;letter-spacing:0.203px;">[~/Desktop/android/android-project/android-studio-project/training-project</div><div style="left:293px;top:23px;width:987px;height:29px;background:#e6e6e6;border-top:1px solid #bcbcbc"></div><svg class="ic" style="left:298.7px;top:30px" width="16" height="14" viewBox="0 0 16 14" ><path d="M0.8 1.2 H6.4 L7.8 3.2 H15 V13 H0.8 Z" fill="#a07a38"/><rect x="2.6" y="5" width="10.6" height="6.2" fill="#e9e3d3"/></svg><svg class="ic" style="left:325px;top:30.5px" width="13" height="13" viewBox="0 0 13 13" ><path d="M0.5 0.5 H12.5 V12.5 H0.5 Z" fill="#4f5358"/><rect x="3.4" y="0.5" width="6.2" height="4.6" fill="#f2f2f2"/><rect x="3.4" y="8.6" width="6.2" height="3.9" fill="#8a8d92"/><rect x="6.4" y="9" width="2.6" height="3.5" fill="#4f5358"/></svg><svg class="ic" style="left:350px;top:29.5px" width="16" height="16" viewBox="0 0 16 16" ><path d="M12.6 5.2 A5.3 5.3 0 0 0 3 6.5 M3.4 10.8 A5.3 5.3 0 0 0 13 9.5" fill="none" stroke="#2a70a4" stroke-width="3"/><path d="M9.2 6.8 L15.6 7 L14.8 0.8 Z M6.8 9.2 L0.4 9 L1.2 15.2 Z" fill="#2a70a4"/></svg><div class="sep" style="left:373px"></div><svg class="ic" style="left:381px;top:31px" width="16" height="13" viewBox="0 0 16 13" ><path d="M0.4 7 L7.4 0.8 V4.2 C11.5 4.2 15 2.8 15.6 0.6 C15.6 6 12.5 9.6 7.4 9.6 V13 Z" fill="#8a64a4"/></svg><svg class="ic" style="left:406px;top:31px" width="16" height="13" viewBox="0 0 16 13" ><path d="M15.6 6 L8.6 0.4 V3.6 C4 3.6 0.6 6.6 0.4 12.4 C2 9.6 4.8 8.6 8.6 8.8 V12 Z" fill="#6f7378"/></svg><div class="sep" style="left:430px"></div><svg class="ic" style="left:438px;top:29px" width="15" height="17" viewBox="0 0 15 17" ><path d="M2.6 0.6 L10.4 11.4 M12.4 0.6 L4.6 11.4" stroke="#55595e" stroke-width="1.7" fill="none"/><circle cx="3.4" cy="13.2" r="2.5" fill="none" stroke="#7d68b4" stroke-width="1.7"/><circle cx="11.6" cy="13.2" r="2.5" fill="none" stroke="#7d68b4" stroke-width="1.7"/></svg><svg class="ic" style="left:464px;top:29.5px" width="15" height="16" viewBox="0 0 15 16" ><rect x="4.6" y="0.8" width="9.4" height="11.4" fill="#f4f6f8" stroke="#5a6068" stroke-width="1.4"/><rect x="1" y="3.8" width="9.4" height="11.4" fill="#fafcfe" stroke="#3f7fb0" stroke-width="1.6"/></svg><svg class="ic" style="left:489px;top:29.5px" width="15" height="16" viewBox="0 0 15 16" ><rect x="4.2" y="1.6" width="10" height="12" fill="#b8862e" stroke="#8c6420" stroke-width="1"/><rect x="7" y="0.4" width="4.4" height="2.6" fill="#777"/><rect x="1" y="5.4" width="8.2" height="9.8" fill="#fafafa" stroke="#5a6068" stroke-width="1.5"/></svg><div class="sep" style="left:511.5px"></div><svg class="ic" style="left:520px;top:29.5px" width="16" height="16" viewBox="0 0 16 16" ><circle cx="6.4" cy="6.2" r="4.7" fill="#d9dde0" stroke="#62666c" stroke-width="2.3"/><path d="M10 9.8 L14.8 14.6" stroke="#62666c" stroke-width="2.8"/><path d="M4 5.2 A2.6 2.6 0 0 1 8.8 5.2" fill="none" stroke="#f4f4f4" stroke-width="1.2"/></svg><svg class="ic" style="left:544px;top:29.5px" width="17" height="17" viewBox="0 0 17 17" ><circle cx="9" cy="5.8" r="4.5" fill="#d9dde0" stroke="#62666c" stroke-width="2.3"/><path d="M12.2 9 L16 12.8" stroke="#62666c" stroke-width="2.6"/><path d="M6.6 4.8 A2.6 2.6 0 0 1 11.4 4.8" fill="none" stroke="#f4f4f4" stroke-width="1.2"/><path d="M1 16.6 L4.6 8.6 L8.2 16.6 M2.4 13.8 H6.8" fill="none" stroke="#6c7076" stroke-width="1.5"/></svg><div class="sep" style="left:568px"></div><svg class="ic" style="left:576px;top:30.5px" width="15" height="14" viewBox="0 0 15 14" ><path d="M0.8 7 L7.6 0.8 V4.4 H14.2 V9.6 H7.6 V13.2 Z" fill="#eaf3fa" stroke="#2f7fc0" stroke-width="1.7" stroke-linejoin="round"/></svg><svg class="ic" style="left:602px;top:31px" width="14" height="13" viewBox="0 0 14 13" ><path d="M13.2 6.5 L6.8 0.8 V4.2 H0.8 V8.8 H6.8 V12.2 Z" fill="#f4f4f4" stroke="#5c6066" stroke-width="1.5" stroke-linejoin="round"/></svg><div class="sep" style="left:625px"></div><svg class="ic" style="left:632.5px;top:29.5px" width="16" height="16" viewBox="0 0 16 16" ><path d="M2.4 0.6 H6 V8 H8.4 L4.2 13.6 L0 8 H2.4 Z" fill="#3c9a4a"/><text x="9" y="5" font-size="5" font-family="Liberation Mono,monospace" font-weight="bold" fill="#555">01</text><text x="9" y="10" font-size="5" font-family="Liberation Mono,monospace" font-weight="bold" fill="#555">10</text><text x="9" y="15" font-size="5" font-family="Liberation Mono,monospace" font-weight="bold" fill="#555">01</text></svg><div style="left:656px;top:28px;width:63px;height:19px;border-radius:4px;background:#f1f1f1;border:1px solid #cfcfcf;box-shadow:0 1px 1px rgba(0,0,0,0.10)"></div><svg class="ic" style="left:662px;top:29.5px" width="16" height="16" viewBox="0 0 16 16" ><path d="M3.2 6.2 H12.8 V12 A1 1 0 0 1 11.8 13 H4.2 A1 1 0 0 1 3.2 12 Z" fill="#809f2d"/><path d="M3.3 5.6 A4.7 4.2 0 0 1 12.7 5.6 Z" fill="#809f2d"/><rect x="0.8" y="6.2" width="1.9" height="5" rx="0.95" fill="#809f2d"/><rect x="13.3" y="6.2" width="1.9" height="5" rx="0.95" fill="#809f2d"/><rect x="5" y="12" width="2" height="3.4" rx="1" fill="#809f2d"/><rect x="9" y="12" width="2" height="3.4" rx="1" fill="#809f2d"/><path d="M4.6 0.8 L5.8 2.6 M11.4 0.8 L10.2 2.6" stroke="#809f2d" stroke-width="0.8"/><circle cx="6" cy="3.8" r="0.6" fill="#fff"/><circle cx="10" cy="3.8" r="0.6" fill="#fff"/></svg><div style="left:672px;top:41px;width:5px;height:5px;background:#4a6a4a;border-radius:3px"></div><div class="t crumb" style="left:682px;top:37.5px;font-size:11.4px">app</div><svg class="ic" style="left:706px;top:36px" width="8" height="5" viewBox="0 0 8 5" ><path d="M0 0 H8 L4 5 Z" fill="#8a8a8a"/></svg><svg class="ic" style="left:727.5px;top:29.5px" width="18" height="16" viewBox="0 0 18 16" ><path d="M3.4 2.4 L0.6 8.6 H2.6 L1.4 13 L5.2 6.6 H3.2 L5 2.4 Z" fill="#e8a33a"/><path d="M6.4 1.4 V14.6 L17.2 8 Z" fill="#2f9e48"/></svg><svg class="ic" style="left:755px;top:29.5px" width="15" height="16" viewBox="0 0 15 16" ><ellipse cx="7.5" cy="9.2" rx="4.8" ry="5.8" fill="#2b8f96"/><path d="M4.2 3.8 A3.3 3.3 0 0 1 10.8 3.8 Z" fill="#2b8f96"/><path d="M0.4 5 L3.6 6.8 M14.6 5 L11.4 6.8 M0 9.2 H3.4 M15 9.2 H11.6 M0.6 14 L3.8 12 M14.4 14 L11.2 12 M4 0.8 L5.6 2.8 M11 0.8 L9.4 2.8" stroke="#2b8f96" stroke-width="1.9"/><path d="M5.2 7.4h4.6M5.2 10.6h4.6" stroke="#d4ecee" stroke-width="1.5"/></svg><svg class="ic" style="left:780px;top:29.5px" width="15" height="16" viewBox="0 0 15 16" ><path d="M0.4 2.4 V13.6 L7 8 Z" fill="#7e8184"/><circle cx="9" cy="8" r="5.8" fill="#a4a6a8"/><path d="M4 5h10M3.4 8h11.4M4 11h10M6 3v10M9 2.2v11.6M12 3v10" stroke="#d6d6d6" stroke-width="0.9"/></svg><svg class="ic" style="left:806px;top:28.5px" width="15" height="17" viewBox="0 0 15 17" ><rect x="1.4" y="0.6" width="8" height="14" rx="1.2" fill="#6a6e73"/><rect x="2.8" y="2.4" width="5.2" height="8.8" fill="#c9d6e0"/><path d="M8.4 9 L14.4 13 L10.6 13.6 L9.4 16.6 Z" fill="#2f9e48"/><rect x="9" y="11" width="5" height="5" fill="#2f9e48"/></svg><svg class="ic" style="left:830px;top:29.5px" width="16" height="16" viewBox="0 0 16 16" ><path d="M11 3.6 A5.6 5.6 0 1 0 12.2 12" fill="none" stroke="#2f9e48" stroke-width="2.5"/><path d="M8.6 0.4 L14.6 3.6 L9 7 Z" fill="#2f9e48"/><rect x="8.6" y="8.6" width="6.8" height="6.8" fill="#8a8d90"/></svg><svg class="ic" style="left:856.5px;top:30.5px" width="14" height="14" viewBox="0 0 14 14" ><rect x="0.5" y="0.5" width="13" height="13" rx="0.6" fill="#d25a42"/><rect x="1.4" y="1.4" width="11.2" height="11.2" fill="#da694e"/></svg><div class="sep" style="left:880px"></div><svg class="ic" style="left:886px;top:29.5px" width="17" height="16" viewBox="0 0 17 16" ><path d="M3 14.4 L10.4 7" stroke="#74787e" stroke-width="3" stroke-linecap="round"/><path d="M14.8 2.2 L12.4 4.6 L13.4 6.2 L16 5 A3.9 3.9 0 1 1 13 1.2 Z" fill="#74787e" transform="translate(-1.2,1)"/><circle cx="4.6" cy="4.4" r="2.5" fill="none" stroke="#e39a32" stroke-width="2.3"/></svg><svg class="ic" style="left:912px;top:29.5px" width="16" height="16" viewBox="0 0 16 16" ><rect x="0.8" y="3" width="12" height="12" fill="#cdd6e0" stroke="#59616a" stroke-width="1.7"/><rect x="3" y="5.4" width="3" height="7.4" fill="#3d8ac4"/><rect x="7.4" y="5.4" width="3" height="3" fill="#3d8ac4"/><rect x="7.4" y="9.8" width="3" height="3" fill="#3d8ac4"/><rect x="11.4" y="0.8" width="4" height="4" fill="#59616a"/><path d="M12.4 7.4h2.4M12.4 10h2.4M12.4 12.6h2.4" stroke="#59616a" stroke-width="1.3"/></svg><div class="sep" style="left:935.5px"></div><svg class="ic" style="left:945px;top:28.5px" width="13" height="17" viewBox="0 0 13 17" ><circle cx="6.5" cy="5.4" r="4.9" fill="#47b27a"/><circle cx="6.5" cy="5.4" r="2.3" fill="#d8f2e4"/><path d="M5 6 H8 V11 H10.6 L6.5 16.4 L2.4 11 H5 Z" fill="#2f7fb8"/></svg><svg class="ic" style="left:968px;top:28.5px" width="17" height="17" viewBox="0 0 17 17" ><rect x="1" y="0.6" width="9.6" height="14" rx="1" fill="#6e4fa0"/><rect x="2.6" y="2.4" width="6.4" height="9.4" fill="#d8cdea"/><path d="M7.2 16 V13 A3.6 3.2 0 0 1 15 13 V16 Z" fill="#8fb03a"/><path d="M0.6 16h16" stroke="#8a6a2a" stroke-width="1.4"/></svg><svg class="ic" style="left:996px;top:28.5px" width="13" height="17" viewBox="0 0 13 17" ><path d="M1.6 5 A4.9 4.4 0 0 1 11.4 5 Z" fill="#8fb03a"/><path d="M3 0.4 L4.4 2 M10 0.4 L8.6 2" stroke="#8fb03a" stroke-width="0.9"/><rect x="0.8" y="6" width="11.4" height="10.4" fill="#4879aa"/><path d="M5 7.4 H8 V11 H10 L6.5 15 L3 11 H5 Z" fill="#eef6fc"/></svg><svg class="ic" style="left:1018.5px;top:29.5px" width="16" height="16" viewBox="0 0 16 16" ><path d="M3.2 6.2 H12.8 V12 A1 1 0 0 1 11.8 13 H4.2 A1 1 0 0 1 3.2 12 Z" fill="#809f2d"/><path d="M3.3 5.6 A4.7 4.2 0 0 1 12.7 5.6 Z" fill="#809f2d"/><rect x="0.8" y="6.2" width="1.9" height="5" rx="0.95" fill="#809f2d"/><rect x="13.3" y="6.2" width="1.9" height="5" rx="0.95" fill="#809f2d"/><rect x="5" y="12" width="2" height="3.4" rx="1" fill="#809f2d"/><rect x="9" y="12" width="2" height="3.4" rx="1" fill="#809f2d"/><path d="M4.6 0.8 L5.8 2.6 M11.4 0.8 L10.2 2.6" stroke="#809f2d" stroke-width="0.8"/><circle cx="6" cy="3.8" r="0.6" fill="#fff"/><circle cx="10" cy="3.8" r="0.6" fill="#fff"/></svg><div class="sep" style="left:1042.5px"></div><div style="left:1052px;top:27px;font-family:'Liberation Sans',sans-serif;font-weight:bold;font-size:20px;line-height:1;color:#2f84c4">?</div><div style="left:293px;top:52px;width:987px;height:25px;background:linear-gradient(#d3d3d3,#cccccc);border-top:1px solid #c0c0c0;border-bottom:1px solid #bebebe"></div><svg class="ic" style="left:303px;top:58px" width="17" height="14" viewBox="0 0 17 14" ><path d="M0.6 0.8 H6 L7.4 2.8 H14.6 V12.4 H0.6 Z" fill="#9c7636"/><rect x="2.2" y="4.4" width="10.8" height="6.4" fill="#e9e4d6"/><rect x="10" y="7.5" width="6.5" height="6.5" fill="#2d74b2"/><rect x="11.2" y="8.7" width="4" height="4" fill="#4189c6"/></svg><div class="t crumb" style="left:321.5px;top:65.6px;">Dream_MVP</div><svg class="ic" style="left:392px;top:53px" width="8" height="23" viewBox="0 0 8 23" ><path d="M0.6 0 L6.6 11.5 L0.6 23" fill="none" stroke="#e0e0e0" stroke-width="1.3"/><path d="M1.7 0 L7.7 11.5 L1.7 23" fill="none" stroke="#9c9c9c" stroke-width="1.1"/></svg><svg class="ic" style="left:404px;top:58px" width="17" height="14" viewBox="0 0 17 14" ><path d="M0.6 0.8 H6 L7.4 2.8 H14.6 V12.4 H0.6 Z" fill="#9c7636"/><rect x="2.2" y="4.4" width="10.8" height="6.4" fill="#e9e4d6"/><rect x="10" y="7.5" width="6.5" height="6.5" fill="#2d74b2"/><rect x="11.2" y="8.7" width="4" height="4" fill="#4189c6"/></svg><div class="t crumb" style="left:422.5px;top:65.6px;">app</div><svg class="ic" style="left:446px;top:53px" width="8" height="23" viewBox="0 0 8 23" ><path d="M0.6 0 L6.6 11.5 L0.6 23" fill="none" stroke="#e0e0e0" stroke-width="1.3"/><path d="M1.7 0 L7.7 11.5 L1.7 23" fill="none" stroke="#9c9c9c" stroke-width="1.1"/></svg><svg class="ic" style="left:456px;top:58.5px" width="16" height="13" viewBox="0 0 16 13" ><path d="M0.6 0.8 H6 L7.4 2.8 H14.6 V12.4 H0.6 Z" fill="#9c7636"/><rect x="2.2" y="4.4" width="10.8" height="6.4" fill="#e9e4d6"/></svg><div class="t crumb" style="left:474.5px;top:65.6px;">src</div><svg class="ic" style="left:495.5px;top:53px" width="8" height="23" viewBox="0 0 8 23" ><path d="M0.6 0 L6.6 11.5 L0.6 23" fill="none" stroke="#e0e0e0" stroke-width="1.3"/><path d="M1.7 0 L7.7 11.5 L1.7 23" fill="none" stroke="#9c9c9c" stroke-width="1.1"/></svg><svg class="ic" style="left:506px;top:58.5px" width="16" height="13" viewBox="0 0 16 13" ><path d="M0.6 0.8 H6 L7.4 2.8 H14.6 V12.4 H0.6 Z" fill="#9c7636"/><rect x="2.2" y="4.4" width="10.8" height="6.4" fill="#e9e4d6"/></svg><div class="t crumb" style="left:524.5px;top:65.6px;">main</div><svg class="ic" style="left:553.5px;top:53px" width="8" height="23" viewBox="0 0 8 23" ><path d="M0.6 0 L6.6 11.5 L0.6 23" fill="none" stroke="#e0e0e0" stroke-width="1.3"/><path d="M1.7 0 L7.7 11.5 L1.7 23" fill="none" stroke="#9c9c9c" stroke-width="1.1"/></svg><svg class="ic" style="left:565px;top:58.5px" width="16" height="13" viewBox="0 0 16 13" ><path d="M0.6 0.8 H6 L7.4 2.8 H14.6 V12.4 H0.6 Z" fill="#36729a"/><rect x="2.2" y="4.4" width="10.8" height="6.4" fill="#f1f4f6"/></svg><div class="t crumb" style="left:583px;top:65.6px;">java</div><svg class="ic" style="left:607.5px;top:53px" width="8" height="23" viewBox="0 0 8 23" ><path d="M0.6 0 L6.6 11.5 L0.6 23" fill="none" stroke="#e0e0e0" stroke-width="1.3"/><path d="M1.7 0 L7.7 11.5 L1.7 23" fill="none" stroke="#9c9c9c" stroke-width="1.1"/></svg><svg class="ic" style="left:618px;top:58.5px" width="16" height="13" viewBox="0 0 16 13" ><path d="M0.6 0.8 H6 L7.4 2.8 H14.6 V12.4 H0.6 Z" fill="#7d6238"/><rect x="2.2" y="4.4" width="10.8" height="6.4" fill="#f1f1f4"/><ellipse cx="5.5" cy="7.4" rx="2.1" ry="1.9" fill="#2f6caa"/><rect x="7.6" y="7" width="2.8" height="0.9" fill="#a8b4c0"/></svg><div class="t crumb" style="left:636.5px;top:65.6px;">tz</div><svg class="ic" style="left:650px;top:53px" width="8" height="23" viewBox="0 0 8 23" ><path d="M0.6 0 L6.6 11.5 L0.6 23" fill="none" stroke="#e0e0e0" stroke-width="1.3"/><path d="M1.7 0 L7.7 11.5 L1.7 23" fill="none" stroke="#9c9c9c" stroke-width="1.1"/></svg><svg class="ic" style="left:660.5px;top:58.5px" width="16" height="13" viewBox="0 0 16 13" ><path d="M0.6 0.8 H6 L7.4 2.8 H14.6 V12.4 H0.6 Z" fill="#7d6238"/><rect x="2.2" y="4.4" width="10.8" height="6.4" fill="#f1f1f4"/><ellipse cx="5.5" cy="7.4" rx="2.1" ry="1.9" fill="#2f6caa"/><rect x="7.6" y="7" width="2.8" height="0.9" fill="#a8b4c0"/></svg><div class="t crumb" style="left:679px;top:65.6px;">dream_mvp</div><svg class="ic" style="left:746px;top:53px" width="8" height="23" viewBox="0 0 8 23" ><path d="M0.6 0 L6.6 11.5 L0.6 23" fill="none" stroke="#e0e0e0" stroke-width="1.3"/><path d="M1.7 0 L7.7 11.5 L1.7 23" fill="none" stroke="#9c9c9c" stroke-width="1.1"/></svg><svg class="ic" style="left:757px;top:58.5px" width="16" height="13" viewBox="0 0 16 13" ><path d="M0.6 0.8 H6 L7.4 2.8 H14.6 V12.4 H0.6 Z" fill="#7d6238"/><rect x="2.2" y="4.4" width="10.8" height="6.4" fill="#f1f1f4"/><ellipse cx="5.5" cy="7.4" rx="2.1" ry="1.9" fill="#2f6caa"/><rect x="7.6" y="7" width="2.8" height="0.9" fill="#a8b4c0"/></svg><div class="t crumb" style="left:775px;top:65.6px;">http</div><svg class="ic" style="left:800px;top:53px" width="8" height="23" viewBox="0 0 8 23" ><path d="M0.6 0 L6.6 11.5 L0.6 23" fill="none" stroke="#e0e0e0" stroke-width="1.3"/><path d="M1.7 0 L7.7 11.5 L1.7 23" fill="none" stroke="#9c9c9c" stroke-width="1.1"/></svg><svg class="ic" style="left:811px;top:58.5px" width="16" height="13" viewBox="0 0 16 13" ><path d="M0.6 0.8 H6 L7.4 2.8 H14.6 V12.4 H0.6 Z" fill="#7d6238"/><rect x="2.2" y="4.4" width="10.8" height="6.4" fill="#f1f1f4"/><ellipse cx="5.5" cy="7.4" rx="2.1" ry="1.9" fill="#2f6caa"/><rect x="7.6" y="7" width="2.8" height="0.9" fill="#a8b4c0"/></svg><div class="t crumb" style="left:830px;top:65.6px;">utils</div><svg class="ic" style="left:855px;top:53px" width="8" height="23" viewBox="0 0 8 23" ><path d="M0.6 0 L6.6 11.5 L0.6 23" fill="none" stroke="#e0e0e0" stroke-width="1.3"/><path d="M1.7 0 L7.7 11.5 L1.7 23" fill="none" stroke="#9c9c9c" stroke-width="1.1"/></svg><svg class="ic" style="left:866.5px;top:58px" width="14" height="14" viewBox="0 0 14 14" ><circle cx="7" cy="7" r="6.6" fill="#6fb0e6"/><circle cx="7" cy="7" r="5.3" fill="#b4d8f4"/><text x="7" y="10.2" text-anchor="middle" font-family="Liberation Sans,sans-serif" font-weight="bold" font-size="8.8" fill="#3f74a6">C</text></svg><div class="t crumb" style="left:885px;top:65.6px;">HttpTask</div><svg class="ic" style="left:937px;top:53px" width="8" height="23" viewBox="0 0 8 23" ><path d="M0.6 0 L6.6 11.5 L0.6 23" fill="none" stroke="#e0e0e0" stroke-width="1.3"/><path d="M1.7 0 L7.7 11.5 L1.7 23" fill="none" stroke="#9c9c9c" stroke-width="1.1"/></svg><div style="left:293px;top:77px;width:21px;height:528px;background:#dedede;border-right:1px solid #c6c6c6"></div><div style="left:293px;top:77px;width:20.5px;height:88px;background:#b0b0b0;"></div><div class="vt" style="left:299.3px;top:136.5px;"><u>1</u>: Project</div><svg class="ic" style="left:297px;top:140.5px" width="14" height="13" viewBox="0 0 14 13" ><circle cx="7" cy="6.6" r="6.2" fill="#3d7f30"/><path d="M2.2 11 A4.8 5.2 0 0 1 11.8 11 Z" fill="#b4dca0"/><path d="M3.6 3 L5.2 5.6 M10.4 3 L8.8 5.6" stroke="#b4dca0" stroke-width="1"/><circle cx="5.2" cy="8.6" r="0.8" fill="#2f6a26"/><circle cx="8.8" cy="8.6" r="0.8" fill="#2f6a26"/></svg><div class="vt" style="left:299.3px;top:239.5px;"><u>Z</u>: Structure</div><svg class="ic" style="left:297px;top:243px" width="14" height="13" viewBox="0 0 14 13" ><path d="M2.4 4.2 L11 2.6 L7 10.6 Z" fill="none" stroke="#3f5878" stroke-width="1.5"/><circle cx="2.4" cy="4.2" r="2.2" fill="#3a78ba"/><circle cx="11" cy="2.6" r="2.1" fill="#cc5238"/><circle cx="7" cy="10.6" r="2.2" fill="#b8523c"/></svg><div class="vt" style="left:299.3px;top:328px;">Captures</div><svg class="ic" style="left:297px;top:332.5px" width="13" height="14" viewBox="0 0 13 14" ><path d="M8.2 1.2 L10.4 2.6" stroke="#56789f" stroke-width="2"/><circle cx="6.3" cy="7.8" r="5.6" fill="#688cb3"/><circle cx="6.3" cy="7.8" r="3.9" fill="#b2c6dc"/><circle cx="6.3" cy="7.8" r="1.9" fill="#5d7ea6"/></svg><div class="vt" style="left:299.3px;top:544px;">Build Variants</div><svg class="ic" style="left:297px;top:548px" width="13" height="13" viewBox="0 0 16 16" ><path d="M3.2 6.2 H12.8 V12 A1 1 0 0 1 11.8 13 H4.2 A1 1 0 0 1 3.2 12 Z" fill="#718f22"/><path d="M3.3 5.6 A4.7 4.2 0 0 1 12.7 5.6 Z" fill="#718f22"/><rect x="0.8" y="6.2" width="1.9" height="5" rx="0.95" fill="#718f22"/><rect x="13.3" y="6.2" width="1.9" height="5" rx="0.95" fill="#718f22"/><rect x="5" y="12" width="2" height="3.4" rx="1" fill="#718f22"/><rect x="9" y="12" width="2" height="3.4" rx="1" fill="#718f22"/><path d="M4.6 0.8 L5.8 2.6 M11.4 0.8 L10.2 2.6" stroke="#718f22" stroke-width="0.8"/><circle cx="6" cy="3.8" r="0.6" fill="#fff"/><circle cx="10" cy="3.8" r="0.6" fill="#fff"/></svg><div class="vt" style="left:299.3px;top:646px;"><u>2</u>: Favorites</div><div style="left:314px;top:77px;width:364px;height:23px;background:linear-gradient(#bac2d1,#a8b1c3)"></div><div style="left:315px;top:77px;width:81px;height:23px;background:linear-gradient(#6a80a6,#52698f)"></div><svg class="ic" style="left:325.3px;top:80.3px" width="15.5" height="15.5" viewBox="0 0 16 16" ><path d="M3.2 6.2 H12.8 V12 A1 1 0 0 1 11.8 13 H4.2 A1 1 0 0 1 3.2 12 Z" fill="#6f8f22"/><path d="M3.3 5.6 A4.7 4.2 0 0 1 12.7 5.6 Z" fill="#6f8f22"/><rect x="0.8" y="6.2" width="1.9" height="5" rx="0.95" fill="#6f8f22"/><rect x="13.3" y="6.2" width="1.9" height="5" rx="0.95" fill="#6f8f22"/><rect x="5" y="12" width="2" height="3.4" rx="1" fill="#6f8f22"/><rect x="9" y="12" width="2" height="3.4" rx="1" fill="#6f8f22"/><path d="M4.6 0.8 L5.8 2.6 M11.4 0.8 L10.2 2.6" stroke="#6f8f22" stroke-width="0.8"/><circle cx="6" cy="3.8" r="0.6" fill="#fff"/><circle cx="10" cy="3.8" r="0.6" fill="#fff"/></svg><div class="t crumb" style="left:345.5px;top:88.5px;color:#f2f4f8;-webkit-text-stroke:0.1px #f2f4f8;text-shadow:0 1px 1px #33415c;letter-spacing:-0.118px;">Android</div><div style="left:396px;top:77px;width:99px;height:23px;background:linear-gradient(#afb7c8,#9ea8bb);border-right:1px solid #8390a6"></div><svg class="ic" style="left:407px;top:81px" width="14" height="14" viewBox="0 0 14 14" ><circle cx="7" cy="7" r="6.6" fill="#8b97a8"/><path d="M7 0.4 A6.6 6.6 0 0 1 13.6 7 L7 7 Z" fill="#4f8fc6"/><path d="M3 9 L8 12.6 L5 13 Z" fill="#a8604a"/><circle cx="5.4" cy="6" r="2.4" fill="#aab4c2"/></svg><div class="t crumb" style="left:426px;top:88.5px;color:#20283a;-webkit-text-stroke:0.1px #20283a;letter-spacing:-0.41px;">Project Files</div><svg class="ic" style="left:504px;top:83.5px" width="13" height="10" viewBox="0 0 13 10" ><path d="M0 5 L5.4 0.4 V9.6 Z M13 5 L7.6 0.4 V9.6 Z" fill="#2f3a4a"/></svg><svg class="ic" style="left:579px;top:82px" width="13" height="13" viewBox="0 0 13 13" ><circle cx="6.5" cy="6.5" r="4.9" fill="none" stroke="#3d4758" stroke-width="2.3"/><path d="M3.4 3.4 L9.6 9.6 M9.6 3.4 L3.4 9.6" stroke="#3d4758" stroke-width="2"/><circle cx="6.5" cy="6.5" r="1.7" fill="#3d4758"/></svg><svg class="ic" style="left:601px;top:82px" width="13" height="13" viewBox="0 0 13 13" ><path d="M6.5 0 V13 M0 6.5 H13" stroke="#667087" stroke-width="1.2"/><path d="M6.5 5 L4.2 2.2 H8.8 Z M6.5 8 L4.2 10.8 H8.8 Z M5 6.5 L2.2 4.2 V8.8 Z M8 6.5 L10.8 4.2 V8.8 Z" fill="#667087"/></svg><div style="left:622px;top:80px;width:1px;height:17px;background:#c6ccd8;"></div><svg class="ic" style="left:630px;top:82px" width="18" height="13" viewBox="0 0 18 13" ><circle cx="6.5" cy="6.5" r="4.4" fill="none" stroke="#363c48" stroke-width="3.2" stroke-dasharray="2.1 1.35"/><circle cx="6.5" cy="6.5" r="3" fill="none" stroke="#363c48" stroke-width="2.2"/><path d="M13.6 5.4 h3.6 l-1.8 2.4 Z" fill="#363c48"/></svg><svg class="ic" style="left:658.5px;top:82.5px" width="13" height="12" viewBox="0 0 13 12" ><path d="M1.8 0.4 V11.6" stroke="#3d4654" stroke-width="2"/><path d="M12.6 5 H6" stroke="#3d4654" stroke-width="1.4"/><path d="M3.6 5 L7.4 2.4 V7.6 Z" fill="#3d4654"/><rect x="0.4" y="0.4" width="2.8" height="2.2" fill="#3d4654"/></svg><div style="left:314px;top:100px;width:364px;height:505px;background:linear-gradient(#f1f1f1,#ebebeb 60%);"></div><div style="left:314px;top:271.5px;width:351px;height:57.7px;background:#2057ba;"></div><div style="left:665px;top:100px;width:13px;height:505px;background:#e7e5e5;"></div><div style="left:677.7px;top:100px;width:1px;height:505px;background:#b2b2b2;"></div><div style="left:666.5px;top:100px;width:9.5px;height:111px;background:#cfcfcf;border-radius:4.5px"></div><svg class="ic" style="left:317.4px;top:104.7px" width="9.8" height="8.4" viewBox="0 0 9.8 8.4" ><path d="M0.1 0.2 H9.7 L4.9 8.2 Z" fill="#858585"/></svg><svg class="ic" style="left:336px;top:101.0px" width="17" height="14" viewBox="0 0 17 14" ><path d="M0.6 0.8 H6 L7.4 2.8 H14.6 V12.4 H0.6 Z" fill="#9c7636"/><rect x="2.2" y="4.4" width="10.8" height="6.4" fill="#e9e4d6"/><rect x="10" y="7.5" width="6.5" height="6.5" fill="#2d74b2"/><rect x="11.2" y="8.7" width="4" height="4" fill="#4189c6"/></svg><div class="t tree treeb" style="left:355px;top:108.9px;">app</div><svg class="ic" style="left:336.4px;top:123.9px" width="9.8" height="8.4" viewBox="0 0 9.8 8.4" ><path d="M0.1 0.2 H9.7 L4.9 8.2 Z" fill="#858585"/></svg><svg class="ic" style="left:357px;top:120.7px" width="16" height="13" viewBox="0 0 16 13" ><path d="M0.6 0.8 H6 L7.4 2.8 H14.6 V12.4 H0.6 Z" fill="#36729a"/><rect x="2.2" y="4.4" width="10.8" height="6.4" fill="#f1f4f6"/></svg><div class="t tree" style="left:375px;top:128.1px;">manifests</div><svg class="ic" style="left:378px;top:138.9px" width="14" height="15" viewBox="0 0 14 15" ><path d="M1.5 0.8 H8.5 L12 4.2 V14.2 H1.5 Z" fill="#f2f0ea" stroke="#625c50" stroke-width="1.4"/><path d="M8.5 0.8 V4.2 H12" fill="none" stroke="#625c50" stroke-width="1"/><rect x="0.3" y="5" width="13" height="6.6" rx="1.2" fill="#db851f"/><path d="M5.6 6.4 L3.3 8.3 L5.6 10.2 M8 6.4 L10.3 8.3 L8 10.2" fill="none" stroke="#6b3608" stroke-width="1.5"/></svg><div class="t tree" style="left:395px;top:147.3px;;letter-spacing:0.124px;">AndroidManifest.xml</div><svg class="ic" style="left:336.4px;top:162.3px" width="9.8" height="8.4" viewBox="0 0 9.8 8.4" ><path d="M0.1 0.2 H9.7 L4.9 8.2 Z" fill="#858585"/></svg><svg class="ic" style="left:357px;top:159.1px" width="16" height="13" viewBox="0 0 16 13" ><path d="M0.6 0.8 H6 L7.4 2.8 H14.6 V12.4 H0.6 Z" fill="#36729a"/><rect x="2.2" y="4.4" width="10.8" height="6.4" fill="#f1f4f6"/></svg><div class="t tree" style="left:375px;top:166.5px;">java</div><svg class="ic" style="left:356.4px;top:181.5px" width="9.8" height="8.4" viewBox="0 0 9.8 8.4" ><path d="M0.1 0.2 H9.7 L4.9 8.2 Z" fill="#858585"/></svg><svg class="ic" style="left:377.0px;top:177.7px" width="16" height="13" viewBox="0 0 16 13" ><path d="M0.6 0.8 H6 L7.4 2.8 H14.6 V12.4 H0.6 Z" fill="#7d6238"/><rect x="2.2" y="4.4" width="10.8" height="6.4" fill="#f1f1f4"/><ellipse cx="5.5" cy="7.4" rx="2.1" ry="1.9" fill="#2f6caa"/><rect x="7.6" y="7" width="2.8" height="0.9" fill="#a8b4c0"/></svg><div class="t tree" style="left:395px;top:185.7px;">tz.dream_mvp</div><svg class="ic" style="left:377.7px;top:199.4px" width="8.2" height="9.6" viewBox="0 0 8.2 9.6" ><path d="M0.2 0.1 V9.5 L8 4.8 Z" fill="#858585"/></svg><svg class="ic" style="left:397.0px;top:196.9px" width="16" height="13" viewBox="0 0 16 13" ><path d="M0.6 0.8 H6 L7.4 2.8 H14.6 V12.4 H0.6 Z" fill="#7d6238"/><rect x="2.2" y="4.4" width="10.8" height="6.4" fill="#f1f1f4"/><ellipse cx="5.5" cy="7.4" rx="2.1" ry="1.9" fill="#2f6caa"/><rect x="7.6" y="7" width="2.8" height="0.9" fill="#a8b4c0"/></svg><div class="t tree" style="left:415px;top:204.9px;">bean</div><svg class="ic" style="left:376.4px;top:219.9px" width="9.8" height="8.4" viewBox="0 0 9.8 8.4" ><path d="M0.1 0.2 H9.7 L4.9 8.2 Z" fill="#858585"/></svg><svg class="ic" style="left:397.0px;top:216.1px" width="16" height="13" viewBox="0 0 16 13" ><path d="M0.6 0.8 H6 L7.4 2.8 H14.6 V12.4 H0.6 Z" fill="#7d6238"/><rect x="2.2" y="4.4" width="10.8" height="6.4" fill="#f1f1f4"/><ellipse cx="5.5" cy="7.4" rx="2.1" ry="1.9" fill="#2f6caa"/><rect x="7.6" y="7" width="2.8" height="0.9" fill="#a8b4c0"/></svg><div class="t tree" style="left:415px;top:224.1px;">http</div><svg class="ic" style="left:397.7px;top:237.8px" width="8.2" height="9.6" viewBox="0 0 8.2 9.6" ><path d="M0.2 0.1 V9.5 L8 4.8 Z" fill="#858585"/></svg><svg class="ic" style="left:417.0px;top:235.3px" width="16" height="13" viewBox="0 0 16 13" ><path d="M0.6 0.8 H6 L7.4 2.8 H14.6 V12.4 H0.6 Z" fill="#7d6238"/><rect x="2.2" y="4.4" width="10.8" height="6.4" fill="#f1f1f4"/><ellipse cx="5.5" cy="7.4" rx="2.1" ry="1.9" fill="#2f6caa"/><rect x="7.6" y="7" width="2.8" height="0.9" fill="#a8b4c0"/></svg><div class="t tree" style="left:435px;top:243.3px;">impl</div><svg class="ic" style="left:396.4px;top:258.3px" width="9.8" height="8.4" viewBox="0 0 9.8 8.4" ><path d="M0.1 0.2 H9.7 L4.9 8.2 Z" fill="#858585"/></svg><svg class="ic" style="left:417.0px;top:254.5px" width="16" height="13" viewBox="0 0 16 13" ><path d="M0.6 0.8 H6 L7.4 2.8 H14.6 V12.4 H0.6 Z" fill="#7d6238"/><rect x="2.2" y="4.4" width="10.8" height="6.4" fill="#f1f1f4"/><ellipse cx="5.5" cy="7.4" rx="2.1" ry="1.9" fill="#2f6caa"/><rect x="7.6" y="7" width="2.8" height="0.9" fill="#a8b4c0"/></svg><div class="t tree" style="left:435px;top:262.5px;">utils</div><svg class="ic" style="left:438px;top:273.3px" width="15" height="15" viewBox="0 0 15 15" ><circle cx="7.5" cy="7.5" r="7" fill="#8cbfe2"/><circle cx="7.5" cy="7.5" r="5.6" fill="#b9d9ee"/><text x="7.5" y="11" text-anchor="middle" font-family='"Liberation Sans",sans-serif' font-weight="bold" font-size="9.5" fill="#4a6f90">C</text></svg><svg class="ic" style="left:456.5px;top:275.3px" width="10" height="11" viewBox="0 0 10 11" ><path d="M1.6 5 V3.2 A2.2 2.2 0 0 1 6 3.2" fill="none" stroke="#3fa052" stroke-width="1.5"/><rect x="3" y="4.8" width="6.6" height="5.8" rx="0.8" fill="#3fa052"/><rect x="5.3" y="6.8" width="2" height="1.9" fill="#cfe8d0"/></svg><div class="t tree" style="left:471.5px;top:281.7px;color:#d5def2;-webkit-text-stroke:0.4px #d5def2;letter-spacing:0.3px;">HttpTask</div><svg class="ic" style="left:438px;top:292.5px" width="15" height="15" viewBox="0 0 15 15" ><circle cx="7.5" cy="7.5" r="7" fill="#8cbfe2"/><circle cx="7.5" cy="7.5" r="5.6" fill="#b9d9ee"/><text x="7.5" y="11" text-anchor="middle" font-family='"Liberation Sans",sans-serif' font-weight="bold" font-size="9.5" fill="#4a6f90">C</text></svg><svg class="ic" style="left:456.5px;top:294.5px" width="10" height="11" viewBox="0 0 10 11" ><path d="M1.6 5 V3.2 A2.2 2.2 0 0 1 6 3.2" fill="none" stroke="#3fa052" stroke-width="1.5"/><rect x="3" y="4.8" width="6.6" height="5.8" rx="0.8" fill="#3fa052"/><rect x="5.3" y="6.8" width="2" height="1.9" fill="#cfe8d0"/></svg><div class="t tree" style="left:471.5px;top:300.9px;color:#d5def2;-webkit-text-stroke:0.4px #d5def2;letter-spacing:0.3px;">HttpUtils</div><svg class="ic" style="left:438px;top:311.7px" width="15" height="15" viewBox="0 0 15 15" ><circle cx="7.5" cy="7.5" r="7" fill="#8cbfe2"/><circle cx="7.5" cy="7.5" r="5.6" fill="#b9d9ee"/><text x="7.5" y="11" text-anchor="middle" font-family='"Liberation Sans",sans-serif' font-weight="bold" font-size="9.5" fill="#4a6f90">C</text></svg><svg class="ic" style="left:456.5px;top:313.7px" width="10" height="11" viewBox="0 0 10 11" ><path d="M1.6 5 V3.2 A2.2 2.2 0 0 1 6 3.2" fill="none" stroke="#3fa052" stroke-width="1.5"/><rect x="3" y="4.8" width="6.6" height="5.8" rx="0.8" fill="#3fa052"/><rect x="5.3" y="6.8" width="2" height="1.9" fill="#cfe8d0"/></svg><div class="t tree" style="left:471.5px;top:320.1px;color:#d5def2;-webkit-text-stroke:0.4px #d5def2;letter-spacing:0.3px;">StreamTool</div><svg class="ic" style="left:418px;top:330.9px" width="15" height="15" viewBox="0 0 15 15" ><circle cx="7.5" cy="7.5" r="7" fill="#4fa653"/><circle cx="7.5" cy="7.5" r="5.6" fill="#90cf8d"/><text x="7.5" y="11" text-anchor="middle" font-family='"Liberation Serif",serif' font-weight="bold" font-size="9.5" fill="#1c4a24">I</text></svg><svg class="ic" style="left:436.5px;top:332.9px" width="10" height="11" viewBox="0 0 10 11" ><path d="M1.6 5 V3.2 A2.2 2.2 0 0 1 6 3.2" fill="none" stroke="#2f8c44" stroke-width="1.5"/><rect x="3" y="4.8" width="6.6" height="5.8" rx="0.8" fill="#2f8c44"/><rect x="5.3" y="6.8" width="2" height="1.9" fill="#cfe8d0"/></svg><div class="t tree" style="left:451.5px;top:339.3px;">IHttpCommand</div><svg class="ic" style="left:418px;top:350.1px" width="15" height="15" viewBox="0 0 15 15" ><circle cx="7.5" cy="7.5" r="7" fill="#4fa653"/><circle cx="7.5" cy="7.5" r="5.6" fill="#90cf8d"/><text x="7.5" y="11" text-anchor="middle" font-family='"Liberation Serif",serif' font-weight="bold" font-size="9.5" fill="#1c4a24">I</text></svg><svg class="ic" style="left:436.5px;top:352.1px" width="10" height="11" viewBox="0 0 10 11" ><path d="M1.6 5 V3.2 A2.2 2.2 0 0 1 6 3.2" fill="none" stroke="#2f8c44" stroke-width="1.5"/><rect x="3" y="4.8" width="6.6" height="5.8" rx="0.8" fill="#2f8c44"/><rect x="5.3" y="6.8" width="2" height="1.9" fill="#cfe8d0"/></svg><div class="t tree" style="left:451.5px;top:358.5px;">IRequestParam</div><svg class="ic" style="left:377.7px;top:372.2px" width="8.2" height="9.6" viewBox="0 0 8.2 9.6" ><path d="M0.2 0.1 V9.5 L8 4.8 Z" fill="#858585"/></svg><svg class="ic" style="left:397.0px;top:369.7px" width="16" height="13" viewBox="0 0 16 13" ><path d="M0.6 0.8 H6 L7.4 2.8 H14.6 V12.4 H0.6 Z" fill="#7d6238"/><rect x="2.2" y="4.4" width="10.8" height="6.4" fill="#f1f1f4"/><ellipse cx="5.5" cy="7.4" rx="2.1" ry="1.9" fill="#2f6caa"/><rect x="7.6" y="7" width="2.8" height="0.9" fill="#a8b4c0"/></svg><div class="t tree" style="left:415px;top:377.7px;">mvp</div><svg class="ic" style="left:376.4px;top:392.7px" width="9.8" height="8.4" viewBox="0 0 9.8 8.4" ><path d="M0.1 0.2 H9.7 L4.9 8.2 Z" fill="#858585"/></svg><svg class="ic" style="left:397.0px;top:388.9px" width="16" height="13" viewBox="0 0 16 13" ><path d="M0.6 0.8 H6 L7.4 2.8 H14.6 V12.4 H0.6 Z" fill="#7d6238"/><rect x="2.2" y="4.4" width="10.8" height="6.4" fill="#f1f1f4"/><ellipse cx="5.5" cy="7.4" rx="2.1" ry="1.9" fill="#2f6caa"/><rect x="7.6" y="7" width="2.8" height="0.9" fill="#a8b4c0"/></svg><div class="t tree" style="left:415px;top:396.9px;">pro</div><svg class="ic" style="left:397.7px;top:410.6px" width="8.2" height="9.6" viewBox="0 0 8.2 9.6" ><path d="M0.2 0.1 V9.5 L8 4.8 Z" fill="#858585"/></svg><svg class="ic" style="left:417.0px;top:408.1px" width="16" height="13" viewBox="0 0 16 13" ><path d="M0.6 0.8 H6 L7.4 2.8 H14.6 V12.4 H0.6 Z" fill="#7d6238"/><rect x="2.2" y="4.4" width="10.8" height="6.4" fill="#f1f1f4"/><ellipse cx="5.5" cy="7.4" rx="2.1" ry="1.9" fill="#2f6caa"/><rect x="7.6" y="7" width="2.8" height="0.9" fill="#a8b4c0"/></svg><div class="t tree" style="left:435px;top:416.1px;">attention</div><svg class="ic" style="left:396.4px;top:431.1px" width="9.8" height="8.4" viewBox="0 0 9.8 8.4" ><path d="M0.1 0.2 H9.7 L4.9 8.2 Z" fill="#858585"/></svg><svg class="ic" style="left:417.0px;top:427.3px" width="16" height="13" viewBox="0 0 16 13" ><path d="M0.6 0.8 H6 L7.4 2.8 H14.6 V12.4 H0.6 Z" fill="#7d6238"/><rect x="2.2" y="4.4" width="10.8" height="6.4" fill="#f1f1f4"/><ellipse cx="5.5" cy="7.4" rx="2.1" ry="1.9" fill="#2f6caa"/><rect x="7.6" y="7" width="2.8" height="0.9" fill="#a8b4c0"/></svg><div class="t tree" style="left:435px;top:435.3px;">base</div><svg class="ic" style="left:417.7px;top:449.0px" width="8.2" height="9.6" viewBox="0 0 8.2 9.6" ><path d="M0.2 0.1 V9.5 L8 4.8 Z" fill="#858585"/></svg><svg class="ic" style="left:437.0px;top:446.5px" width="16" height="13" viewBox="0 0 16 13" ><path d="M0.6 0.8 H6 L7.4 2.8 H14.6 V12.4 H0.6 Z" fill="#7d6238"/><rect x="2.2" y="4.4" width="10.8" height="6.4" fill="#f1f1f4"/><ellipse cx="5.5" cy="7.4" rx="2.1" ry="1.9" fill="#2f6caa"/><rect x="7.6" y="7" width="2.8" height="0.9" fill="#a8b4c0"/></svg><div class="t tree" style="left:455px;top:454.5px;">model</div><svg class="ic" style="left:417.7px;top:468.2px" width="8.2" height="9.6" viewBox="0 0 8.2 9.6" ><path d="M0.2 0.1 V9.5 L8 4.8 Z" fill="#858585"/></svg><svg class="ic" style="left:437.0px;top:465.7px" width="16" height="13" viewBox="0 0 16 13" ><path d="M0.6 0.8 H6 L7.4 2.8 H14.6 V12.4 H0.6 Z" fill="#7d6238"/><rect x="2.2" y="4.4" width="10.8" height="6.4" fill="#f1f1f4"/><ellipse cx="5.5" cy="7.4" rx="2.1" ry="1.9" fill="#2f6caa"/><rect x="7.6" y="7" width="2.8" height="0.9" fill="#a8b4c0"/></svg><div class="t tree" style="left:455px;top:473.7px;">presenter</div><svg class="ic" style="left:417.7px;top:487.4px" width="8.2" height="9.6" viewBox="0 0 8.2 9.6" ><path d="M0.2 0.1 V9.5 L8 4.8 Z" fill="#858585"/></svg><svg class="ic" style="left:437.0px;top:484.9px" width="16" height="13" viewBox="0 0 16 13" ><path d="M0.6 0.8 H6 L7.4 2.8 H14.6 V12.4 H0.6 Z" fill="#7d6238"/><rect x="2.2" y="4.4" width="10.8" height="6.4" fill="#f1f1f4"/><ellipse cx="5.5" cy="7.4" rx="2.1" ry="1.9" fill="#2f6caa"/><rect x="7.6" y="7" width="2.8" height="0.9" fill="#a8b4c0"/></svg><div class="t tree" style="left:455px;top:492.9px;">view</div><svg class="ic" style="left:396.4px;top:507.9px" width="9.8" height="8.4" viewBox="0 0 9.8 8.4" ><path d="M0.1 0.2 H9.7 L4.9 8.2 Z" fill="#858585"/></svg><svg class="ic" style="left:417.0px;top:504.1px" width="16" height="13" viewBox="0 0 16 13" ><path d="M0.6 0.8 H6 L7.4 2.8 H14.6 V12.4 H0.6 Z" fill="#7d6238"/><rect x="2.2" y="4.4" width="10.8" height="6.4" fill="#f1f1f4"/><ellipse cx="5.5" cy="7.4" rx="2.1" ry="1.9" fill="#2f6caa"/><rect x="7.6" y="7" width="2.8" height="0.9" fill="#a8b4c0"/></svg><div class="t tree" style="left:435px;top:512.1px;">essence</div><svg class="ic" style="left:417.7px;top:525.8px" width="8.2" height="9.6" viewBox="0 0 8.2 9.6" ><path d="M0.2 0.1 V9.5 L8 4.8 Z" fill="#858585"/></svg><svg class="ic" style="left:437.0px;top:523.3px" width="16" height="13" viewBox="0 0 16 13" ><path d="M0.6 0.8 H6 L7.4 2.8 H14.6 V12.4 H0.6 Z" fill="#7d6238"/><rect x="2.2" y="4.4" width="10.8" height="6.4" fill="#f1f1f4"/><ellipse cx="5.5" cy="7.4" rx="2.1" ry="1.9" fill="#2f6caa"/><rect x="7.6" y="7" width="2.8" height="0.9" fill="#a8b4c0"/></svg><div class="t tree" style="left:455px;top:531.3px;">model</div><svg class="ic" style="left:417.7px;top:545.0px" width="8.2" height="9.6" viewBox="0 0 8.2 9.6" ><path d="M0.2 0.1 V9.5 L8 4.8 Z" fill="#858585"/></svg><svg class="ic" style="left:437.0px;top:542.5px" width="16" height="13" viewBox="0 0 16 13" ><path d="M0.6 0.8 H6 L7.4 2.8 H14.6 V12.4 H0.6 Z" fill="#7d6238"/><rect x="2.2" y="4.4" width="10.8" height="6.4" fill="#f1f1f4"/><ellipse cx="5.5" cy="7.4" rx="2.1" ry="1.9" fill="#2f6caa"/><rect x="7.6" y="7" width="2.8" height="0.9" fill="#a8b4c0"/></svg><div class="t tree" style="left:455px;top:550.5px;">presenter</div><svg class="ic" style="left:416.4px;top:565.5px" width="9.8" height="8.4" viewBox="0 0 9.8 8.4" ><path d="M0.1 0.2 H9.7 L4.9 8.2 Z" fill="#858585"/></svg><svg class="ic" style="left:437.0px;top:561.7px" width="16" height="13" viewBox="0 0 16 13" ><path d="M0.6 0.8 H6 L7.4 2.8 H14.6 V12.4 H0.6 Z" fill="#7d6238"/><rect x="2.2" y="4.4" width="10.8" height="6.4" fill="#f1f1f4"/><ellipse cx="5.5" cy="7.4" rx="2.1" ry="1.9" fill="#2f6caa"/><rect x="7.6" y="7" width="2.8" height="0.9" fill="#a8b4c0"/></svg><div class="t tree" style="left:455px;top:569.7px;">view</div><svg class="ic" style="left:438.7px;top:583.4px" width="8.2" height="9.6" viewBox="0 0 8.2 9.6" ><path d="M0.2 0.1 V9.5 L8 4.8 Z" fill="#858585"/></svg><svg class="ic" style="left:458.5px;top:580.9px" width="16" height="13" viewBox="0 0 16 13" ><path d="M0.6 0.8 H6 L7.4 2.8 H14.6 V12.4 H0.6 Z" fill="#7d6238"/><rect x="2.2" y="4.4" width="10.8" height="6.4" fill="#f1f1f4"/><ellipse cx="5.5" cy="7.4" rx="2.1" ry="1.9" fill="#2f6caa"/><rect x="7.6" y="7" width="2.8" height="0.9" fill="#a8b4c0"/></svg><div class="t tree" style="left:476px;top:588.9px;">adapter</div><svg class="ic" style="left:437.4px;top:603.9px" width="9.8" height="8.4" viewBox="0 0 9.8 8.4" ><path d="M0.1 0.2 H9.7 L4.9 8.2 Z" fill="#858585"/></svg><svg class="ic" style="left:458.5px;top:600.1px" width="16" height="13" viewBox="0 0 16 13" ><path d="M0.6 0.8 H6 L7.4 2.8 H14.6 V12.4 H0.6 Z" fill="#7d6238"/><rect x="2.2" y="4.4" width="10.8" height="6.4" fill="#f1f1f4"/><ellipse cx="5.5" cy="7.4" rx="2.1" ry="1.9" fill="#2f6caa"/><rect x="7.6" y="7" width="2.8" height="0.9" fill="#a8b4c0"/></svg><div class="t tree" style="left:476px;top:608.1px;">views</div><div style="left:678px;top:77px;width:602px;height:23px;background:linear-gradient(#cdcdcd,#c6c6c6)"></div><div style="left:678px;top:77px;width:90px;height:23px;overflow:hidden"><div class="t tab" style="left:-4.5px;top:11.5px;color:#555">oFragment.java</div></div><div style="left:738px;top:78px;width:20px;height:21px;background:linear-gradient(90deg,rgba(201,201,201,0),rgba(201,201,201,0.8));"></div><svg class="ic" style="left:764.5px;top:85.0px" width="7" height="7" viewBox="0 0 7 7" ><path d="M0.5 0.5 L6.5 6.5 M6.5 0.5 L0.5 6.5" stroke="#666" stroke-width="1.4"/></svg><div style="left:780.5px;top:77px;width:220.7px;height:23px;background:#f3f3f3;"></div><svg class="ic" style="left:790.3px;top:80.5px" width="14" height="15" viewBox="0 0 14 15" ><path d="M1.5 0.8 H8.5 L12 4.2 V14.2 H1.5 Z" fill="#f2f0ea" stroke="#625c50" stroke-width="1.4"/><path d="M8.5 0.8 V4.2 H12" fill="none" stroke="#625c50" stroke-width="1"/><rect x="0.3" y="5" width="13" height="6.6" rx="1.2" fill="#db851f"/><path d="M5.6 6.4 L3.3 8.3 L5.6 10.2 M8 6.4 L10.3 8.3 L8 10.2" fill="none" stroke="#6b3608" stroke-width="1.5"/></svg><div class="t tab" style="left:808px;top:88.5px;color:#2a2a2a;-webkit-text-stroke:0.45px #2a2a2a;letter-spacing:0.024px;">item_essence_video_layout.xml</div><svg class="ic" style="left:986.0px;top:85.0px" width="7" height="7" viewBox="0 0 7 7" ><path d="M0.5 0.5 L6.5 6.5 M6.5 0.5 L0.5 6.5" stroke="#666" stroke-width="1.4"/></svg><svg class="ic" style="left:1012px;top:80.5px" width="14" height="15" viewBox="0 0 14 15" ><path d="M1.5 0.8 H8.5 L12 4.2 V14.2 H1.5 Z" fill="#f2f0ea" stroke="#625c50" stroke-width="1.4"/><path d="M8.5 0.8 V4.2 H12" fill="none" stroke="#625c50" stroke-width="1"/><rect x="0.3" y="5" width="13" height="6.6" rx="1.2" fill="#db851f"/><path d="M5.6 6.4 L3.3 8.3 L5.6 10.2 M8 6.4 L10.3 8.3 L8 10.2" fill="none" stroke="#6b3608" stroke-width="1.5"/></svg><div class="t tab" style="left:1030.5px;top:88.5px;">dimens.xml</div><svg class="ic" style="left:1099.5px;top:85.0px" width="7" height="7" viewBox="0 0 7 7" ><path d="M0.5 0.5 L6.5 6.5 M6.5 0.5 L0.5 6.5" stroke="#666" stroke-width="1.4"/></svg><svg class="ic" style="left:1125px;top:81.5px" width="14" height="14" viewBox="0 0 14 14" ><circle cx="7" cy="7" r="6.6" fill="#6fb0e6"/><circle cx="7" cy="7" r="5.3" fill="#b4d8f4"/><text x="7" y="10.2" text-anchor="middle" font-family="Liberation Sans,sans-serif" font-weight="bold" font-size="8.8" fill="#3f74a6">C</text></svg><div class="t tab" style="left:1143.5px;top:88.5px;;letter-spacing:-0.165px;">EssenceFragment.java</div><svg class="ic" style="left:1269.5px;top:85.0px" width="7" height="7" viewBox="0 0 7 7" ><path d="M0.5 0.5 L6.5 6.5 M6.5 0.5 L0.5 6.5" stroke="#666" stroke-width="1.4"/></svg><div style="left:1115px;top:80px;width:1px;height:17px;background:#bbbbbb;"></div><div style="left:678px;top:100px;width:602px;height:505px;background:#ededed;"></div><div style="left:678px;top:100px;width:602px;height:33px;background:#e9e9e9;"></div><div style="left:678px;top:99.5px;width:602px;height:2px;background:#f3f3f3;"></div><div style="left:678px;top:132.3px;width:602px;height:1px;background:#f2f2f2;"></div><div style="left:678px;top:133px;width:30px;height:472px;background:#dadada;"></div><div style="left:708px;top:133px;width:8.5px;height:472px;background:#d9dbdb;"></div><div style="left:716px;top:133px;width:1px;height:472px;background:#b9bcbc;"></div><div style="left:717px;top:133px;width:6px;height:472px;background:#ecebea;"></div><div style="left:678px;top:517.5px;width:38px;height:21px;background:#efe9d0;"></div><div style="left:717px;top:517.5px;width:6px;height:21px;background:#f6f1da;"></div><div style="left:978px;top:517.5px;width:302px;height:21px;background:#fdf8e2;"></div><div style="left:706.2px;top:133px;width:2px;height:427px;background:#c48a7a;"></div><div style="left:706.4px;top:560px;width:1.6px;height:45px;background:#d2bc78;"></div><div style="left:722.6px;top:133.5px;width:558px;height:384.5px;background:#3f5b90;"></div><div style="left:722.6px;top:517.5px;width:256px;height:21px;background:#3f5b90;"></div><div style="left:768.4px;top:133.5px;width:1.5px;height:404.5px;background:#7d92bc;"></div><div style="left:812.9px;top:133.5px;width:1.5px;height:362.5px;background:#7d92bc;"></div><div style="left:857.4px;top:242px;width:1.5px;height:96px;background:#7d92bc;"></div><div style="left:857.4px;top:390px;width:1.5px;height:106px;background:#7d92bc;"></div><div style="left:719px;top:106.5px;width:143px;height:24px;background:#e8ead6;border:1px solid #c3c6ac"></div><div style="left:866px;top:106.5px;width:144.5px;height:24px;background:#eed4be;border:1px solid #d9b89a"></div><div class="t code" style="left:724px;top:120px;color:#74746a;-webkit-text-stroke:0.1px #74746a">LinearLayout</div><div class="t code" style="left:871px;top:120px;color:#7a6c60;-webkit-text-stroke:0.1px #7a6c60">LinearLayout</div><div style="left:1011.5px;top:132.8px;width:11px;height:1.8px;background:#dfe5f0;"></div><div style="left:1167.5px;top:132.8px;width:11px;height:1.8px;background:#dfe5f0;"></div><div class="t code" style="left:856px;top:147.3px;">android:layout_weight="1"</div><div class="t code" style="left:856px;top:168.5px;">android:orientation="horizontal"</div><div class="t code" style="left:856px;top:189.7px;">android:gravity="center"<i>&gt;</i></div><div class="t code" style="left:856px;top:232.1px;"><i>&lt;</i>ImageView</div><div class="t code" style="left:900px;top:253.3px;">android:id="@+id/iv_comment"</div><div class="t code" style="left:900px;top:274.5px;">android:layout_width="26dp"</div><div class="t code" style="left:900px;top:295.7px;">android:layout_height="26dp"</div><div class="t code" style="left:900px;top:316.9px;">android:src="@drawable/essence_comment_icon"</div><div class="t code" style="left:900px;top:338.1px;">android:scaleType="fitXY"<i>/&gt;</i></div><div class="t code" style="left:856px;top:380.5px;"><i>&lt;</i>TextView</div><div class="t code" style="left:900px;top:401.7px;">android:id="@+id/tv_comment"</div><div class="t code" style="left:900px;top:422.9px;">android:layout_width="wrap_content"</div><div class="t code" style="left:900px;top:444.1px;">android:layout_height="wrap_content"</div><div class="t code" style="left:900px;top:465.3px;">android:text="709"</div><div class="t code" style="left:900px;top:486.5px;">android:layout_marginLeft="2dp"<i>/&gt;</i></div><div class="t code" style="left:812px;top:528.9px;"><i>&lt;/</i>LinearLayout<i>&gt;</i></div><div style="left:767px;top:540.1px;width:167px;height:20px;background:#f2dada;"></div><div class="t code ns" style="left:767.5px;top:550.1px;color:#1d1d72;-webkit-text-stroke:0.75px #1d1d72"><i>&lt;/</i>LinearLayout<i>&gt;</i></div><div style="left:722px;top:582.5px;width:167px;height:20px;background:#f1efd9;"></div><div class="t code ns" style="left:722.5px;top:592.5px;color:#1d1d72;-webkit-text-stroke:0.75px #1d1d72"><i>&lt;/</i>LinearLayout<i>&gt;</i></div><svg class="ic" style="left:711.5px;top:227px" width="9" height="10" viewBox="0 0 9 10" ><path d="M0.6 0.6 H8.4 V6.2 L4.5 9.4 L0.6 6.2 Z" fill="#f1f1f1" stroke="#b0b0b0" stroke-width="1"/><path d="M2.4 3.8h4.2" stroke="#9a9a9a" stroke-width="1"/></svg><svg class="ic" style="left:711.5px;top:333px" width="9" height="10" viewBox="0 0 9 10" ><path d="M0.6 9.4 H8.4 V3.8 L4.5 0.6 L0.6 3.8 Z" fill="#f1f1f1" stroke="#b0b0b0" stroke-width="1"/><path d="M2.4 6.2h4.2" stroke="#9a9a9a" stroke-width="1"/></svg><svg class="ic" style="left:711.5px;top:375px" width="9" height="10" viewBox="0 0 9 10" ><path d="M0.6 0.6 H8.4 V6.2 L4.5 9.4 L0.6 6.2 Z" fill="#f1f1f1" stroke="#b0b0b0" stroke-width="1"/><path d="M2.4 3.8h4.2" stroke="#9a9a9a" stroke-width="1"/></svg><svg class="ic" style="left:711.5px;top:481px" width="9" height="10" viewBox="0 0 9 10" ><path d="M0.6 9.4 H8.4 V3.8 L4.5 0.6 L0.6 3.8 Z" fill="#f1f1f1" stroke="#b0b0b0" stroke-width="1"/><path d="M2.4 6.2h4.2" stroke="#9a9a9a" stroke-width="1"/></svg><svg class="ic" style="left:711.5px;top:523px" width="9" height="10" viewBox="0 0 9 10" ><path d="M0.6 9.4 H8.4 V3.8 L4.5 0.6 L0.6 3.8 Z" fill="#f1f1f1" stroke="#b0b0b0" stroke-width="1"/><path d="M2.4 6.2h4.2" stroke="#9a9a9a" stroke-width="1"/></svg><svg class="ic" style="left:711.5px;top:544px" width="9" height="10" viewBox="0 0 9 10" ><path d="M0.6 9.4 H8.4 V3.8 L4.5 0.6 L0.6 3.8 Z" fill="#f1f1f1" stroke="#b0b0b0" stroke-width="1"/><path d="M2.4 6.2h4.2" stroke="#9a9a9a" stroke-width="1"/></svg><svg class="ic" style="left:711.5px;top:586px" width="9" height="10" viewBox="0 0 9 10" ><path d="M0.6 9.4 H8.4 V3.8 L4.5 0.6 L0.6 3.8 Z" fill="#f1f1f1" stroke="#b0b0b0" stroke-width="1"/><path d="M2.4 6.2h4.2" stroke="#9a9a9a" stroke-width="1"/></svg><div style="left:292px;top:3px;width:1px;height:602px;background:rgba(0,0,0,0.18)"></div>
<div class="topbar"></div>
</div></body></html>
